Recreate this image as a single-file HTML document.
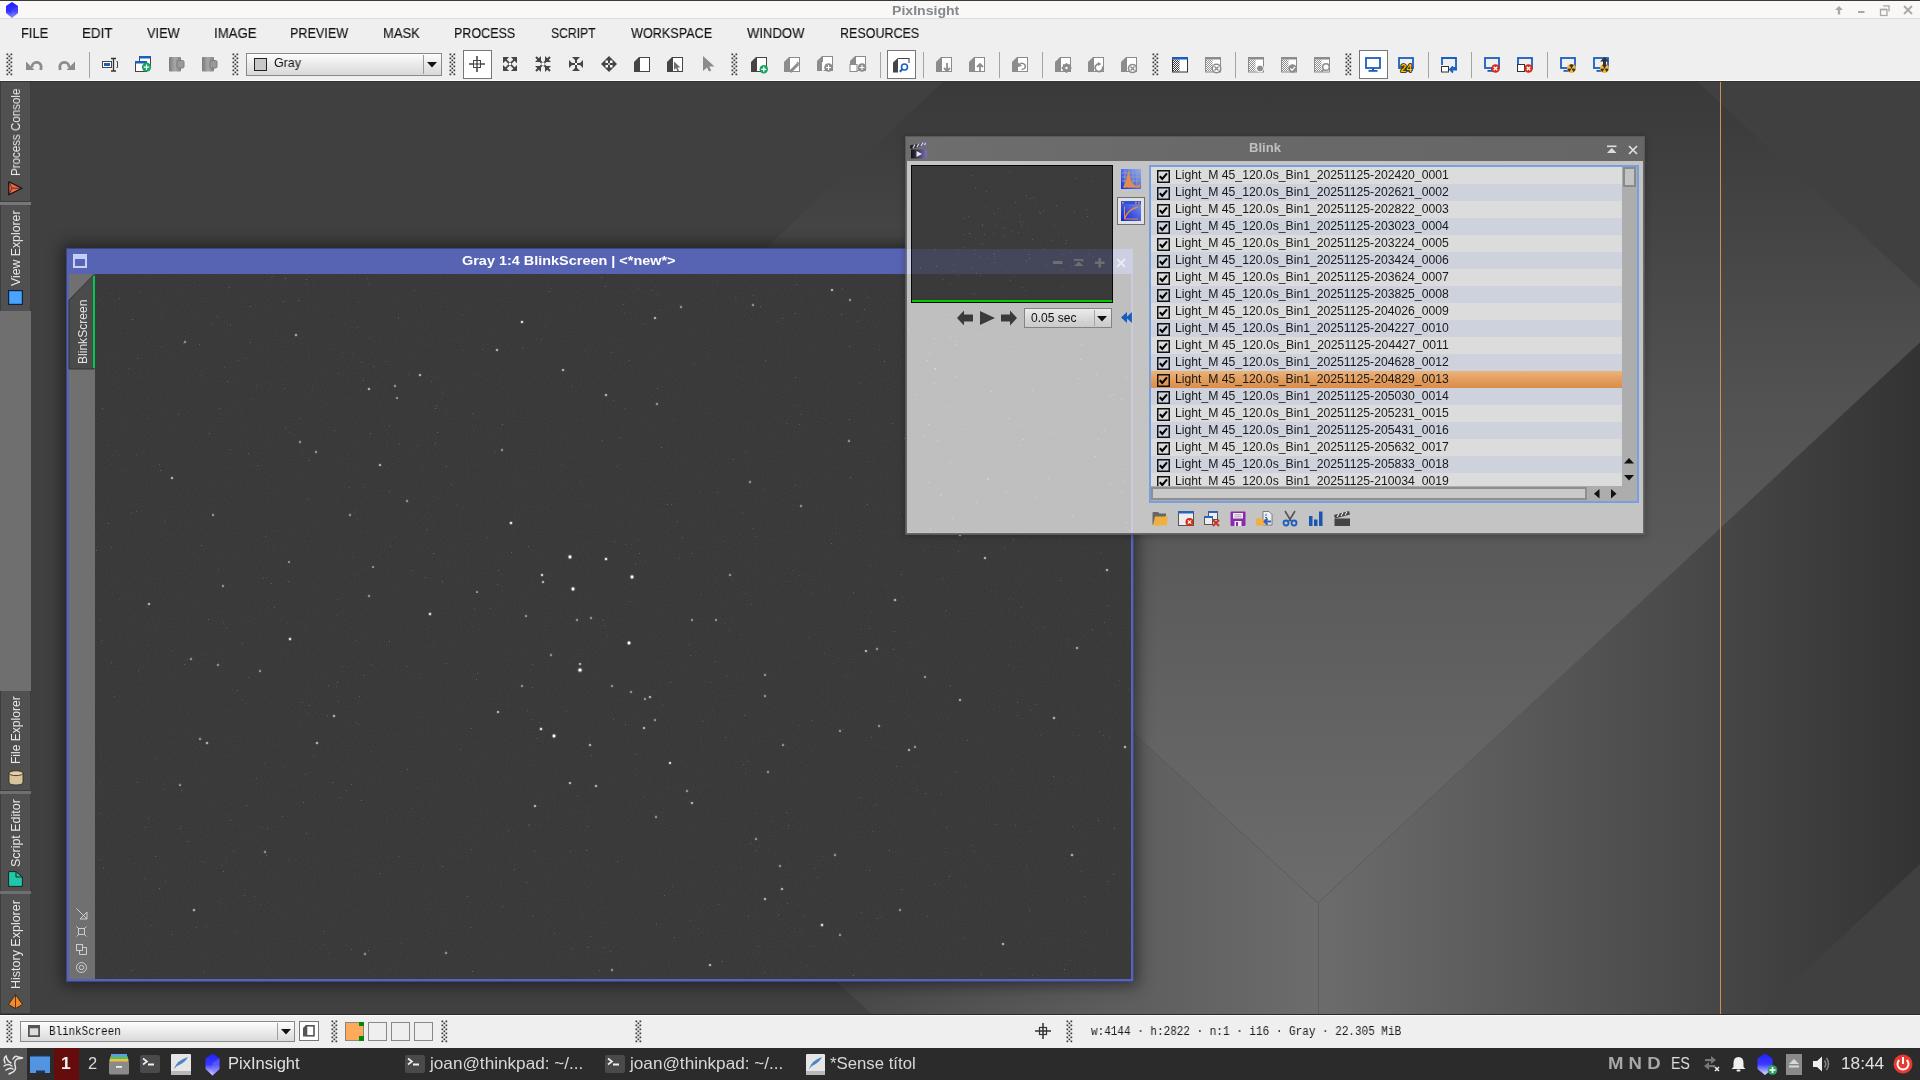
<!DOCTYPE html>
<html><head><meta charset="utf-8">
<style>
*{box-sizing:border-box;margin:0;padding:0}
html,body{width:1920px;height:1080px;overflow:hidden;background:#404040;font-family:"Liberation Sans",sans-serif}
.a{position:absolute}
.t{white-space:pre;line-height:1;will-change:transform}
svg{overflow:visible}
.pl1{background:rgba(110,125,230,0.10)}
.pl2{background:rgba(110,125,230,0.12)}
.pl3{display:none}
@supports (mix-blend-mode: plus-lighter){
.pl1{background:rgb(8,10,30);mix-blend-mode:plus-lighter}
.pl2{background:rgb(6,6,24);mix-blend-mode:plus-lighter}
.pl3{display:block;mix-blend-mode:plus-lighter}
}
</style></head><body>
<svg class="a" style="left:0;top:0" width="1920" height="1080" viewBox="0 0 1920 1080">
<defs>
<linearGradient id="gTop" gradientUnits="userSpaceOnUse" x1="0" y1="81" x2="0" y2="903">
<stop offset="0" stop-color="#393939"></stop><stop offset="0.39" stop-color="#525252"></stop><stop offset="1" stop-color="#6c6c6c"></stop></linearGradient>
<linearGradient id="gLeft" gradientUnits="userSpaceOnUse" x1="687" y1="0" x2="1318" y2="0">
<stop offset="0" stop-color="#3c3c3c"></stop><stop offset="1" stop-color="#6c6c6c"></stop></linearGradient>
<linearGradient id="gRight" gradientUnits="userSpaceOnUse" x1="1318" y1="0" x2="1920" y2="0">
<stop offset="0" stop-color="#6c6c6c"></stop><stop offset="1" stop-color="#333333"></stop></linearGradient>
</defs>
<rect x="0" y="81" width="1920" height="934" fill="#404040"></rect>
<polygon points="1318,903 687,322 1318,-270 1949,315" fill="url(#gTop)"></polygon>
<polygon points="687,322 1318,903 1318,1425 687,844" fill="url(#gLeft)"></polygon>
<polygon points="1318,903 1949,315 1949,837 1318,1425" fill="url(#gRight)"></polygon>
<polyline points="687,322 1318,903 1949,315" fill="none" stroke="#5a5a5a" stroke-width="1" opacity="0.5"></polyline>
<line x1="1318.5" y1="903" x2="1318.5" y2="1015" stroke="#5c5c5c" stroke-width="1"></line>
<rect x="1720" y="81" width="1" height="934" fill="#c8915a"></rect>
</svg>

<div class="a" style="left:0;top:0;width:1920px;height:1px;background:#3b3a38"></div>
<div class="a" style="left:0;top:1px;width:1920px;height:17px;background:#f9f8f6"></div>
<div class="a" style="left:0;top:18px;width:1920px;height:1px;background:#dedddb"></div>
<div class="a" style="left:0;top:19px;width:1920px;height:62px;background:#efefef"></div>
<div class="a" style="left:0;top:80px;width:1920px;height:1px;background:#fafafa"></div>
<svg class="a" style="left:5px;top:2px" width="14" height="16" viewBox="0 0 14 16"><defs><linearGradient id="cubeg" x1="0" y1="0" x2="0" y2="1"><stop offset="0" stop-color="#1a1aff"></stop><stop offset="0.55" stop-color="#3b3bff"></stop><stop offset="1" stop-color="#d8d8ff"></stop></linearGradient></defs>
<polygon points="7,0 13,4 13,11 7,16 1,11 1,4" fill="url(#cubeg)"></polygon><polygon points="7,8 13,4 13,11 7,16" fill="#5050ff" opacity="0.5"></polygon><polygon points="7,8 1,4 1,11 7,16" fill="#2020ff" opacity="0.4"></polygon></svg>
<div class="a t" style="left: 891.6px; top: 3.7px; font-size: 13.6px; font-weight: bold; color: rgb(133, 136, 140); transform-origin: 0px 0px; transform: scaleX(1.0362);">PixInsight</div>
<svg class="a" style="left:1834px;top:5px" width="10" height="10" viewBox="0 0 10 10"><path d="M5 1 L9 5 L6.2 5 L6.2 9.5 L3.8 9.5 L3.8 5 L1 5 Z" fill="#a8a8a8"></path></svg>
<svg class="a" style="left:1858px;top:11px" width="8" height="3" viewBox="0 0 8 3"><rect x="0" y="0" width="6.5" height="2" fill="#a8a8a8"></rect></svg>
<svg class="a" style="left:1879px;top:5px" width="12" height="11" viewBox="0 0 12 11"><rect x="1.5" y="4.5" width="6.5" height="6" fill="none" stroke="#a8a8a8" stroke-width="1.3"></rect><rect x="1.5" y="3.7" width="6.5" height="1.6" fill="#a8a8a8"></rect><path d="M4 0.8 H10 V6.5" fill="none" stroke="#a8a8a8" stroke-width="1.3"></path></svg>
<svg class="a" style="left:1903px;top:5px" width="10" height="10" viewBox="0 0 10 10"><path d="M1 1 L9 9 M9 1 L1 9" stroke="#a8a8a8" stroke-width="1.8"></path></svg>
<div class="a t" style="left: 21.08px; top: 26.25px; font-size: 14px; font-weight: normal; color: rgb(17, 17, 17); -webkit-text-stroke: 0.12px rgb(17, 17, 17); transform-origin: 0px 0px; transform: scaleX(0.9211);">FILE</div>
<div class="a t" style="left: 82.04px; top: 26.25px; font-size: 14px; font-weight: normal; color: rgb(17, 17, 17); -webkit-text-stroke: 0.12px rgb(17, 17, 17); transform-origin: 0px 0px; transform: scaleX(0.9573);">EDIT</div>
<div class="a t" style="left: 147px; top: 26.25px; font-size: 14px; font-weight: normal; color: rgb(17, 17, 17); -webkit-text-stroke: 0.12px rgb(17, 17, 17); transform-origin: 0px 0px; transform: scaleX(0.9162);">VIEW</div>
<div class="a t" style="left: 214.06px; top: 26.25px; font-size: 14px; font-weight: normal; color: rgb(17, 17, 17); -webkit-text-stroke: 0.12px rgb(17, 17, 17); transform-origin: 0px 0px; transform: scaleX(0.9434);">IMAGE</div>
<div class="a t" style="left: 290.4px; top: 26.25px; font-size: 14px; font-weight: normal; color: rgb(17, 17, 17); -webkit-text-stroke: 0.12px rgb(17, 17, 17); transform-origin: 0px 0px; transform: scaleX(0.9013);">PREVIEW</div>
<div class="a t" style="left: 383.37px; top: 26.25px; font-size: 14px; font-weight: normal; color: rgb(17, 17, 17); -webkit-text-stroke: 0.12px rgb(17, 17, 17); transform-origin: 0px 0px; transform: scaleX(0.9279);">MASK</div>
<div class="a t" style="left: 454.11px; top: 26.25px; font-size: 14px; font-weight: normal; color: rgb(17, 17, 17); -webkit-text-stroke: 0.12px rgb(17, 17, 17); transform-origin: 0px 0px; transform: scaleX(0.8939);">PROCESS</div>
<div class="a t" style="left: 550.5px; top: 26.25px; font-size: 14px; font-weight: normal; color: rgb(17, 17, 17); -webkit-text-stroke: 0.12px rgb(17, 17, 17); transform-origin: 0px 0px; transform: scaleX(0.869);">SCRIPT</div>
<div class="a t" style="left: 630.5px; top: 26.25px; font-size: 14px; font-weight: normal; color: rgb(17, 17, 17); -webkit-text-stroke: 0.12px rgb(17, 17, 17); transform-origin: 0px 0px; transform: scaleX(0.9014);">WORKSPACE</div>
<div class="a t" style="left: 746.8px; top: 26.25px; font-size: 14px; font-weight: normal; color: rgb(17, 17, 17); -webkit-text-stroke: 0.12px rgb(17, 17, 17); transform-origin: 0px 0px; transform: scaleX(0.9355);">WINDOW</div>
<div class="a t" style="left: 839.91px; top: 26.25px; font-size: 14px; font-weight: normal; color: rgb(17, 17, 17); -webkit-text-stroke: 0.12px rgb(17, 17, 17); transform-origin: 0px 0px; transform: scaleX(0.893);">RESOURCES</div>
<svg class="a" style="left:6px;top:53px" width="7" height="22"><rect x="0.5" y="0.5" width="1.7" height="1.7" fill="#3a3a3a"></rect><rect x="4.5" y="0.5" width="1.7" height="1.7" fill="#3a3a3a"></rect><rect x="2.5" y="2.5" width="1.7" height="1.7" fill="#3a3a3a"></rect><rect x="0.5" y="4.5" width="1.7" height="1.7" fill="#3a3a3a"></rect><rect x="4.5" y="4.5" width="1.7" height="1.7" fill="#3a3a3a"></rect><rect x="2.5" y="6.5" width="1.7" height="1.7" fill="#3a3a3a"></rect><rect x="0.5" y="8.5" width="1.7" height="1.7" fill="#3a3a3a"></rect><rect x="4.5" y="8.5" width="1.7" height="1.7" fill="#3a3a3a"></rect><rect x="2.5" y="10.5" width="1.7" height="1.7" fill="#3a3a3a"></rect><rect x="0.5" y="12.5" width="1.7" height="1.7" fill="#3a3a3a"></rect><rect x="4.5" y="12.5" width="1.7" height="1.7" fill="#3a3a3a"></rect><rect x="2.5" y="14.5" width="1.7" height="1.7" fill="#3a3a3a"></rect><rect x="0.5" y="16.5" width="1.7" height="1.7" fill="#3a3a3a"></rect><rect x="4.5" y="16.5" width="1.7" height="1.7" fill="#3a3a3a"></rect><rect x="2.5" y="18.5" width="1.7" height="1.7" fill="#3a3a3a"></rect><rect x="0.5" y="20.5" width="1.7" height="1.7" fill="#3a3a3a"></rect><rect x="4.5" y="20.5" width="1.7" height="1.7" fill="#3a3a3a"></rect></svg>
<svg class="a" style="left:232px;top:53px" width="7" height="22"><rect x="0.5" y="0.5" width="1.7" height="1.7" fill="#3a3a3a"></rect><rect x="4.5" y="0.5" width="1.7" height="1.7" fill="#3a3a3a"></rect><rect x="2.5" y="2.5" width="1.7" height="1.7" fill="#3a3a3a"></rect><rect x="0.5" y="4.5" width="1.7" height="1.7" fill="#3a3a3a"></rect><rect x="4.5" y="4.5" width="1.7" height="1.7" fill="#3a3a3a"></rect><rect x="2.5" y="6.5" width="1.7" height="1.7" fill="#3a3a3a"></rect><rect x="0.5" y="8.5" width="1.7" height="1.7" fill="#3a3a3a"></rect><rect x="4.5" y="8.5" width="1.7" height="1.7" fill="#3a3a3a"></rect><rect x="2.5" y="10.5" width="1.7" height="1.7" fill="#3a3a3a"></rect><rect x="0.5" y="12.5" width="1.7" height="1.7" fill="#3a3a3a"></rect><rect x="4.5" y="12.5" width="1.7" height="1.7" fill="#3a3a3a"></rect><rect x="2.5" y="14.5" width="1.7" height="1.7" fill="#3a3a3a"></rect><rect x="0.5" y="16.5" width="1.7" height="1.7" fill="#3a3a3a"></rect><rect x="4.5" y="16.5" width="1.7" height="1.7" fill="#3a3a3a"></rect><rect x="2.5" y="18.5" width="1.7" height="1.7" fill="#3a3a3a"></rect><rect x="0.5" y="20.5" width="1.7" height="1.7" fill="#3a3a3a"></rect><rect x="4.5" y="20.5" width="1.7" height="1.7" fill="#3a3a3a"></rect></svg>
<svg class="a" style="left:449px;top:53px" width="7" height="22"><rect x="0.5" y="0.5" width="1.7" height="1.7" fill="#3a3a3a"></rect><rect x="4.5" y="0.5" width="1.7" height="1.7" fill="#3a3a3a"></rect><rect x="2.5" y="2.5" width="1.7" height="1.7" fill="#3a3a3a"></rect><rect x="0.5" y="4.5" width="1.7" height="1.7" fill="#3a3a3a"></rect><rect x="4.5" y="4.5" width="1.7" height="1.7" fill="#3a3a3a"></rect><rect x="2.5" y="6.5" width="1.7" height="1.7" fill="#3a3a3a"></rect><rect x="0.5" y="8.5" width="1.7" height="1.7" fill="#3a3a3a"></rect><rect x="4.5" y="8.5" width="1.7" height="1.7" fill="#3a3a3a"></rect><rect x="2.5" y="10.5" width="1.7" height="1.7" fill="#3a3a3a"></rect><rect x="0.5" y="12.5" width="1.7" height="1.7" fill="#3a3a3a"></rect><rect x="4.5" y="12.5" width="1.7" height="1.7" fill="#3a3a3a"></rect><rect x="2.5" y="14.5" width="1.7" height="1.7" fill="#3a3a3a"></rect><rect x="0.5" y="16.5" width="1.7" height="1.7" fill="#3a3a3a"></rect><rect x="4.5" y="16.5" width="1.7" height="1.7" fill="#3a3a3a"></rect><rect x="2.5" y="18.5" width="1.7" height="1.7" fill="#3a3a3a"></rect><rect x="0.5" y="20.5" width="1.7" height="1.7" fill="#3a3a3a"></rect><rect x="4.5" y="20.5" width="1.7" height="1.7" fill="#3a3a3a"></rect></svg>
<svg class="a" style="left:731px;top:53px" width="7" height="22"><rect x="0.5" y="0.5" width="1.7" height="1.7" fill="#3a3a3a"></rect><rect x="4.5" y="0.5" width="1.7" height="1.7" fill="#3a3a3a"></rect><rect x="2.5" y="2.5" width="1.7" height="1.7" fill="#3a3a3a"></rect><rect x="0.5" y="4.5" width="1.7" height="1.7" fill="#3a3a3a"></rect><rect x="4.5" y="4.5" width="1.7" height="1.7" fill="#3a3a3a"></rect><rect x="2.5" y="6.5" width="1.7" height="1.7" fill="#3a3a3a"></rect><rect x="0.5" y="8.5" width="1.7" height="1.7" fill="#3a3a3a"></rect><rect x="4.5" y="8.5" width="1.7" height="1.7" fill="#3a3a3a"></rect><rect x="2.5" y="10.5" width="1.7" height="1.7" fill="#3a3a3a"></rect><rect x="0.5" y="12.5" width="1.7" height="1.7" fill="#3a3a3a"></rect><rect x="4.5" y="12.5" width="1.7" height="1.7" fill="#3a3a3a"></rect><rect x="2.5" y="14.5" width="1.7" height="1.7" fill="#3a3a3a"></rect><rect x="0.5" y="16.5" width="1.7" height="1.7" fill="#3a3a3a"></rect><rect x="4.5" y="16.5" width="1.7" height="1.7" fill="#3a3a3a"></rect><rect x="2.5" y="18.5" width="1.7" height="1.7" fill="#3a3a3a"></rect><rect x="0.5" y="20.5" width="1.7" height="1.7" fill="#3a3a3a"></rect><rect x="4.5" y="20.5" width="1.7" height="1.7" fill="#3a3a3a"></rect></svg>
<svg class="a" style="left:1152px;top:53px" width="7" height="22"><rect x="0.5" y="0.5" width="1.7" height="1.7" fill="#3a3a3a"></rect><rect x="4.5" y="0.5" width="1.7" height="1.7" fill="#3a3a3a"></rect><rect x="2.5" y="2.5" width="1.7" height="1.7" fill="#3a3a3a"></rect><rect x="0.5" y="4.5" width="1.7" height="1.7" fill="#3a3a3a"></rect><rect x="4.5" y="4.5" width="1.7" height="1.7" fill="#3a3a3a"></rect><rect x="2.5" y="6.5" width="1.7" height="1.7" fill="#3a3a3a"></rect><rect x="0.5" y="8.5" width="1.7" height="1.7" fill="#3a3a3a"></rect><rect x="4.5" y="8.5" width="1.7" height="1.7" fill="#3a3a3a"></rect><rect x="2.5" y="10.5" width="1.7" height="1.7" fill="#3a3a3a"></rect><rect x="0.5" y="12.5" width="1.7" height="1.7" fill="#3a3a3a"></rect><rect x="4.5" y="12.5" width="1.7" height="1.7" fill="#3a3a3a"></rect><rect x="2.5" y="14.5" width="1.7" height="1.7" fill="#3a3a3a"></rect><rect x="0.5" y="16.5" width="1.7" height="1.7" fill="#3a3a3a"></rect><rect x="4.5" y="16.5" width="1.7" height="1.7" fill="#3a3a3a"></rect><rect x="2.5" y="18.5" width="1.7" height="1.7" fill="#3a3a3a"></rect><rect x="0.5" y="20.5" width="1.7" height="1.7" fill="#3a3a3a"></rect><rect x="4.5" y="20.5" width="1.7" height="1.7" fill="#3a3a3a"></rect></svg>
<svg class="a" style="left:1345px;top:53px" width="7" height="22"><rect x="0.5" y="0.5" width="1.7" height="1.7" fill="#3a3a3a"></rect><rect x="4.5" y="0.5" width="1.7" height="1.7" fill="#3a3a3a"></rect><rect x="2.5" y="2.5" width="1.7" height="1.7" fill="#3a3a3a"></rect><rect x="0.5" y="4.5" width="1.7" height="1.7" fill="#3a3a3a"></rect><rect x="4.5" y="4.5" width="1.7" height="1.7" fill="#3a3a3a"></rect><rect x="2.5" y="6.5" width="1.7" height="1.7" fill="#3a3a3a"></rect><rect x="0.5" y="8.5" width="1.7" height="1.7" fill="#3a3a3a"></rect><rect x="4.5" y="8.5" width="1.7" height="1.7" fill="#3a3a3a"></rect><rect x="2.5" y="10.5" width="1.7" height="1.7" fill="#3a3a3a"></rect><rect x="0.5" y="12.5" width="1.7" height="1.7" fill="#3a3a3a"></rect><rect x="4.5" y="12.5" width="1.7" height="1.7" fill="#3a3a3a"></rect><rect x="2.5" y="14.5" width="1.7" height="1.7" fill="#3a3a3a"></rect><rect x="0.5" y="16.5" width="1.7" height="1.7" fill="#3a3a3a"></rect><rect x="4.5" y="16.5" width="1.7" height="1.7" fill="#3a3a3a"></rect><rect x="2.5" y="18.5" width="1.7" height="1.7" fill="#3a3a3a"></rect><rect x="0.5" y="20.5" width="1.7" height="1.7" fill="#3a3a3a"></rect><rect x="4.5" y="20.5" width="1.7" height="1.7" fill="#3a3a3a"></rect></svg>
<div class="a" style="left:89px;top:52px;width:1px;height:26px;background:#a4a4a4"></div>
<div class="a" style="left:880px;top:52px;width:1px;height:26px;background:#a4a4a4"></div>
<div class="a" style="left:923px;top:52px;width:1px;height:26px;background:#a4a4a4"></div>
<div class="a" style="left:999px;top:52px;width:1px;height:26px;background:#a4a4a4"></div>
<div class="a" style="left:1042px;top:52px;width:1px;height:26px;background:#a4a4a4"></div>
<div class="a" style="left:1235px;top:52px;width:1px;height:26px;background:#a4a4a4"></div>
<div class="a" style="left:1428px;top:52px;width:1px;height:26px;background:#a4a4a4"></div>
<div class="a" style="left:1471px;top:52px;width:1px;height:26px;background:#a4a4a4"></div>
<div class="a" style="left:1547px;top:52px;width:1px;height:26px;background:#a4a4a4"></div>
<svg class="a" style="left:26px;top:57px" width="16" height="16" viewBox="0 0 16 16"><path d="M6 10.5 A4.6 4.6 0 0 1 15.2 9.5 L14.8 13" fill="none" stroke="#8c8c8c" stroke-width="2.8"></path><polygon points="0,4.5 0,13 8.5,13" fill="#8c8c8c"></polygon></svg>
<svg class="a" style="left:59px;top:57px" width="16" height="16" viewBox="0 0 16 16"><path d="M10 10.5 A4.6 4.6 0 0 0 0.8 9.5 L1.2 13" fill="none" stroke="#8c8c8c" stroke-width="2.8"></path><polygon points="16,4.5 16,13 7.5,13" fill="#8c8c8c"></polygon></svg>
<svg class="a" style="left:102px;top:57px" width="16" height="16" viewBox="0 0 16 16"><rect x="0.5" y="4.5" width="9" height="6" fill="#fff" stroke="#444"></rect><rect x="2" y="6" width="6" height="3" fill="#1a5fc0"></rect><path d="M9 1.5 H14 M11.5 1.5 V14 M9 14 H14" stroke="#333" stroke-width="1.3" fill="none"></path><path d="M14.5 4.5 H15.5 V10.5 H14.5" stroke="#444" fill="none"></path></svg>
<svg class="a" style="left:135px;top:56px" width="16" height="16" viewBox="0 0 16 16"><rect x="4.5" y="1" width="11" height="10" fill="#fff" stroke="#444"></rect><rect x="4" y="0" width="12" height="2.5" fill="#1a5fc0"></rect><rect x="0.5" y="6" width="11" height="9.5" fill="#fff" stroke="#444"></rect><rect x="0" y="5" width="12" height="2.5" fill="#1a5fc0"></rect><circle cx="11.5" cy="11.2" r="4.6" fill="#18a360"></circle><path d="M11.5 8.5 V14 M8.8 11.2 H14.3" stroke="#fff" stroke-width="1.3"></path></svg>
<svg class="a" style="left:169px;top:57px" width="16" height="16" viewBox="0 0 16 16"><defs><linearGradient id="mg169" x1="0" x2="1"><stop offset="0" stop-color="#7a7a7a"></stop><stop offset="0.5" stop-color="#a8a8a8"></stop><stop offset="1" stop-color="#808080"></stop></linearGradient></defs><rect x="0" y="0" width="12" height="14.5" rx="1" fill="url(#mg169)"></rect><rect x="8" y="3.5" width="7" height="7.5" rx="1.5" fill="#9a9a9a" stroke="#7c7c7c"></rect></svg>
<svg class="a" style="left:202px;top:57px" width="16" height="16" viewBox="0 0 16 16"><defs><linearGradient id="mg202" x1="0" x2="1"><stop offset="0" stop-color="#7a7a7a"></stop><stop offset="0.5" stop-color="#a8a8a8"></stop><stop offset="1" stop-color="#808080"></stop></linearGradient></defs><rect x="0" y="0" width="12" height="14.5" rx="1" fill="url(#mg202)"></rect><rect x="8" y="3.5" width="7" height="7.5" rx="1.5" fill="#9a9a9a" stroke="#7c7c7c"></rect></svg>
<div class="a" style="left:246px;top:53px;width:196px;height:23px;border:1px solid #8a8a8a;background:linear-gradient(#fdfdfd,#e6e6e6 60%,#d9d9d9)"></div>
<div class="a" style="left:254px;top:58px;width:13px;height:13px;border:1.3px solid #222;background:#c8c8c8"></div>
<div class="a t" style="left: 274.4px; top: 57.4px; font-size: 12.7px; font-weight: normal; color: rgb(17, 17, 17); transform-origin: 0px 0px; transform: scaleX(0.9805);">Gray</div>
<div class="a" style="left:423px;top:55px;width:1px;height:19px;background:#9c9c9c"></div>
<svg class="a" style="left:427px;top:62px" width="10" height="6" viewBox="0 0 10 6"><polygon points="0,0 10,0 5,5.5" fill="#111"></polygon></svg>
<div class="a" style="left:463px;top:50px;width:29px;height:29px;border:1px solid #777;background:#fff"></div>
<svg class="a" style="left:469px;top:56px" width="16" height="16" viewBox="0 0 16 16"><path d="M8 0 V16 M0 8 H16" stroke="#454545" stroke-width="1.6"></path><rect x="4.5" y="4.5" width="7" height="7" fill="#fff" stroke="#454545" stroke-width="1"></rect><rect x="7.2" y="7.2" width="1.6" height="1.6" fill="#454545"></rect><path d="M8 4.5 V11.5 M4.5 8 H11.5" stroke="#454545" stroke-width="1.2"></path></svg>
<svg class="a" style="left:503px;top:57px" width="16" height="16" viewBox="0 0 16 16"><g transform="scale(0.875)"><polygon points="0,0 7,0 0,7" fill="#454545"></polygon><polygon points="16,0 9,0 16,7" fill="#454545"></polygon><polygon points="0,16 7,16 0,9" fill="#454545"></polygon><polygon points="16,16 9,16 16,9" fill="#454545"></polygon><path d="M1.5 1.5 L14.5 14.5 M14.5 1.5 L1.5 14.5" stroke="#454545" stroke-width="2"></path><rect x="6.8" y="6.8" width="2.4" height="2.4" fill="#fff"></rect></g></svg>
<svg class="a" style="left:535px;top:56px" width="16" height="16" viewBox="0 0 16 16"><path d="M1 1 L15 15 M15 1 L1 15" stroke="#454545" stroke-width="2"></path><polygon points="6,0 6,6 0,6" fill="#454545"></polygon><polygon points="10,0 10,6 16,6" fill="#454545"></polygon><polygon points="6,16 6,10 0,10" fill="#454545"></polygon><polygon points="10,16 10,10 16,10" fill="#454545"></polygon><rect x="6.5" y="6.5" width="3" height="3" fill="#fff"></rect></svg>
<svg class="a" style="left:568px;top:56px" width="16" height="16" viewBox="0 0 16 16"><path d="M8 2 V14 M2 8 H14" stroke="#454545" stroke-width="2"></path><polygon points="4,1 12,1 8,5" fill="#454545"></polygon><polygon points="4,15 12,15 8,11" fill="#454545"></polygon><polygon points="1,4 1,12 5,8" fill="#454545"></polygon><polygon points="15,4 15,12 11,8" fill="#454545"></polygon><rect x="7" y="7" width="2" height="2" fill="#fff"></rect></svg>
<svg class="a" style="left:601px;top:56px" width="16" height="16" viewBox="0 0 16 16"><polygon points="8,0 16,8 8,16 0,8" fill="#454545"></polygon><rect x="4.5" y="4.5" width="2.5" height="2.5" fill="#fff"></rect><rect x="9" y="4.5" width="2.5" height="2.5" fill="#fff"></rect><rect x="4.5" y="9" width="2.5" height="2.5" fill="#fff"></rect><rect x="9" y="9" width="2.5" height="2.5" fill="#fff"></rect><rect x="7.2" y="7.2" width="1.6" height="1.6" fill="#fff"></rect></svg>
<svg class="a" style="left:634px;top:57px" width="16" height="16" viewBox="0 0 16 16"><polygon points="0,5 5,0 5,15 0,15" fill="#454545"></polygon><rect x="5.5" y="0.5" width="10" height="14" fill="#fff" stroke="#454545" stroke-width="1"></rect></svg>
<svg class="a" style="left:667px;top:57px" width="16" height="16" viewBox="0 0 16 16"><polygon points="0,5 5,0 5,15 0,15" fill="#454545"></polygon><rect x="5.5" y="0.5" width="10" height="14" fill="#fff" stroke="#454545" stroke-width="1"></rect><polygon points="7,4.5 7,13 9,11 10.5,14.5 12,13.5 10.5,10.5 13.5,10.5" fill="#6e6e6e"></polygon></svg>
<svg class="a" style="left:703px;top:56px" width="12" height="16" viewBox="0 0 12 16"><polygon points="0,0 0,15 4,11.5 6,15.5 8.3,14.5 6.3,10.5 11.5,10.5" fill="#8c8c8c"></polygon></svg>
<svg class="a" style="left:751px;top:57px" width="16" height="16" viewBox="0 0 16 16"><polygon points="0,5 5,0 5,15 0,15" fill="#454545"></polygon><rect x="5.5" y="0.5" width="10" height="14" fill="#fff" stroke="#454545" stroke-width="1"></rect><circle cx="12.8" cy="12.3" r="4.2" fill="#18a360"></circle><path d="M12.8 9.8 V14.8 M10.3 12.3 H15.3" stroke="#fff" stroke-width="1.3"></path></svg>
<svg class="a" style="left:784px;top:57px" width="16" height="16" viewBox="0 0 16 16"><polygon points="0,5 5,0 5,15 0,15" fill="#8c8c8c"></polygon><rect x="5.5" y="0.5" width="10" height="14" fill="#fff" stroke="#8c8c8c" stroke-width="1"></rect><path d="M6 15 L14 7" stroke="#8c8c8c" stroke-width="3"></path><path d="M13 5 L15 7" stroke="#8c8c8c" stroke-width="1.2"></path></svg>
<svg class="a" style="left:817px;top:56px" width="16" height="16" viewBox="0 0 16 16"><polygon points="0,5 5,0 5,15 0,15" fill="#8c8c8c"></polygon><rect x="5.5" y="0.5" width="10" height="14" fill="#fff" stroke="#8c8c8c" stroke-width="1"></rect><rect x="5" y="6" width="1.5" height="9" fill="#fff"></rect><circle cx="11.5" cy="11.5" r="4.3" fill="#8c8c8c"></circle><path d="M11.5 9 V14 M9 11.5 H14" stroke="#fff" stroke-width="1.2"></path></svg>
<svg class="a" style="left:850px;top:56px" width="16" height="16" viewBox="0 0 16 16"><polygon points="0,5 5,0 5,15 0,15" fill="#8c8c8c"></polygon><rect x="5.5" y="0.5" width="10" height="14" fill="#fff" stroke="#8c8c8c" stroke-width="1"></rect><rect x="0" y="8.5" width="7" height="7" fill="#fff" stroke="#8c8c8c"></rect><circle cx="12" cy="11.5" r="4.3" fill="#8c8c8c"></circle><path d="M12 9 V14 M9.5 11.5 H14.5" stroke="#fff" stroke-width="1.2"></path></svg>
<div class="a" style="left:887px;top:50px;width:29px;height:29px;border:1px solid #777;background:#fff"></div>
<svg class="a" style="left:893px;top:57px" width="16" height="16" viewBox="0 0 16 16"><polygon points="0,5.5 5,1 5,15.5 0,15.5" fill="#454545"></polygon><path d="M5 1.5 H16 V6" fill="none" stroke="#454545" stroke-width="1.1"></path><circle cx="11.5" cy="10" r="3" fill="none" stroke="#1a5fc0" stroke-width="1.6"></circle><path d="M9.3 12.3 L6.8 14.8" stroke="#1a5fc0" stroke-width="2"></path></svg>
<svg class="a" style="left:936px;top:57px" width="16" height="16" viewBox="0 0 16 16"><polygon points="0,5 5,0 5,15 0,15" fill="#8c8c8c"></polygon><rect x="5.5" y="0.5" width="10" height="14" fill="#fff" stroke="#8c8c8c" stroke-width="1"></rect><path d="M11 6 V14 M8 11 L11 14 L14 11" fill="none" stroke="#8c8c8c" stroke-width="1.8"></path></svg>
<svg class="a" style="left:969px;top:57px" width="16" height="16" viewBox="0 0 16 16"><polygon points="0,5 5,0 5,15 0,15" fill="#8c8c8c"></polygon><rect x="5.5" y="0.5" width="10" height="14" fill="#fff" stroke="#8c8c8c" stroke-width="1"></rect><path d="M11 15 V7 M8 10 L11 7 L14 10" fill="none" stroke="#8c8c8c" stroke-width="1.8"></path></svg>
<svg class="a" style="left:1012px;top:57px" width="16" height="16" viewBox="0 0 16 16"><polygon points="0,5 5,0 5,15 0,15" fill="#8c8c8c"></polygon><rect x="5.5" y="0.5" width="10" height="14" fill="#fff" stroke="#8c8c8c" stroke-width="1"></rect><path d="M7 8 Q10 4.5 13 8 Q14.5 12 9.5 12.5" fill="none" stroke="#8c8c8c" stroke-width="1.6"></path><polygon points="6,5.5 6,10 10,9" fill="#8c8c8c"></polygon></svg>
<svg class="a" style="left:1055px;top:57px" width="16" height="16" viewBox="0 0 16 16"><polygon points="0,5 5,0 5,15 0,15" fill="#8c8c8c"></polygon><rect x="5.5" y="0.5" width="10" height="14" fill="#fff" stroke="#8c8c8c" stroke-width="1"></rect><circle cx="11.5" cy="11" r="3.2" fill="none" stroke="#8c8c8c" stroke-width="2.2"></circle><path d="M11.5 6 V16 M6.5 11 H16.5 M8 7.5 L15 14.5 M15 7.5 L8 14.5" stroke="#8c8c8c" stroke-width="1.3"></path><circle cx="11.5" cy="11" r="1.2" fill="#fff"></circle></svg>
<svg class="a" style="left:1088px;top:57px" width="16" height="16" viewBox="0 0 16 16"><polygon points="0,5 5,0 5,15 0,15" fill="#8c8c8c"></polygon><rect x="5.5" y="0.5" width="10" height="14" fill="#fff" stroke="#8c8c8c" stroke-width="1"></rect><path d="M14.5 9.5 A3.8 3.8 0 1 1 11.5 7" fill="none" stroke="#8c8c8c" stroke-width="1.8"></path><polygon points="10,5 13.5,7 10,9" fill="#8c8c8c"></polygon></svg>
<svg class="a" style="left:1121px;top:57px" width="16" height="16" viewBox="0 0 16 16"><polygon points="0,5 5,0 5,15 0,15" fill="#8c8c8c"></polygon><rect x="5.5" y="0.5" width="10" height="14" fill="#fff" stroke="#8c8c8c" stroke-width="1"></rect><circle cx="11.5" cy="11.5" r="4" fill="#fff" stroke="#8c8c8c" stroke-width="1.6"></circle><path d="M9.5 9.5 L13.5 13.5 M13.5 9.5 L9.5 13.5" stroke="#8c8c8c" stroke-width="1.4"></path></svg>
<svg class="a" style="left:1172px;top:57px" width="16" height="16" viewBox="0 0 16 16"><defs><pattern id="ck1172" width="2" height="2" patternUnits="userSpaceOnUse"><rect width="1" height="1" fill="#333"></rect><rect x="1" y="1" width="1" height="1" fill="#333"></rect></pattern></defs><rect x="0.5" y="1" width="15" height="14" fill="#fff" stroke="#333"></rect><rect x="0" y="0" width="16" height="2.5" fill="#1a5fc0"></rect><rect x="1" y="2.5" width="6.5" height="12" fill="url(#ck1172)"></rect></svg>
<svg class="a" style="left:1205px;top:57px" width="16" height="16" viewBox="0 0 16 16"><defs><pattern id="ck1205" width="2" height="2" patternUnits="userSpaceOnUse"><rect width="1" height="1" fill="#8c8c8c"></rect><rect x="1" y="1" width="1" height="1" fill="#8c8c8c"></rect></pattern></defs><rect x="0.5" y="1" width="15" height="14" fill="#fff" stroke="#8c8c8c"></rect><rect x="0" y="0" width="16" height="2.5" fill="#8c8c8c"></rect><rect x="1" y="2.5" width="6.5" height="12" fill="url(#ck1205)"></rect><circle cx="11.5" cy="11.5" r="4.2" fill="#fff" stroke="#8c8c8c" stroke-width="1.6"></circle><path d="M9.5 9.5 L13.5 13.5 M13.5 9.5 L9.5 13.5" stroke="#8c8c8c" stroke-width="1.4"></path></svg>
<svg class="a" style="left:1248px;top:57px" width="16" height="16" viewBox="0 0 16 16"><defs><pattern id="ck1248" width="2" height="2" patternUnits="userSpaceOnUse"><rect width="1" height="1" fill="#8c8c8c"></rect><rect x="1" y="1" width="1" height="1" fill="#8c8c8c"></rect></pattern></defs><rect x="0.5" y="1" width="15" height="14" fill="#fff" stroke="#8c8c8c"></rect><rect x="0" y="0" width="16" height="2.5" fill="#8c8c8c"></rect><rect x="1" y="2.5" width="6.5" height="12" fill="url(#ck1248)"></rect><circle cx="12" cy="11.5" r="3.5" fill="#8c8c8c" stroke="#fff" stroke-width="1"></circle></svg>
<svg class="a" style="left:1281px;top:57px" width="16" height="16" viewBox="0 0 16 16"><defs><pattern id="ck1281" width="2" height="2" patternUnits="userSpaceOnUse"><rect width="1" height="1" fill="#8c8c8c"></rect><rect x="1" y="1" width="1" height="1" fill="#8c8c8c"></rect></pattern></defs><rect x="0.5" y="1" width="15" height="14" fill="#fff" stroke="#8c8c8c"></rect><rect x="0" y="0" width="16" height="2.5" fill="#8c8c8c"></rect><rect x="1" y="2.5" width="6.5" height="12" fill="url(#ck1281)"></rect><circle cx="11.5" cy="11.5" r="4.2" fill="#8c8c8c"></circle><path d="M9.3 11.5 L11 13.3 L14 9.8" fill="none" stroke="#fff" stroke-width="1.3"></path></svg>
<svg class="a" style="left:1314px;top:57px" width="16" height="16" viewBox="0 0 16 16"><defs><pattern id="ck1314" width="2" height="2" patternUnits="userSpaceOnUse"><rect width="1" height="1" fill="#8c8c8c"></rect><rect x="1" y="1" width="1" height="1" fill="#8c8c8c"></rect></pattern></defs><rect x="0.5" y="1" width="15" height="14" fill="#fff" stroke="#8c8c8c"></rect><rect x="0" y="0" width="16" height="2.5" fill="#8c8c8c"></rect><rect x="1" y="2.5" width="6.5" height="12" fill="url(#ck1314)"></rect><circle cx="12" cy="10" r="3.3" fill="#fff" stroke="#8c8c8c" stroke-width="1.5"></circle><path d="M9.5 12.5 L7.5 14.8" stroke="#8c8c8c" stroke-width="1.8"></path></svg>
<div class="a" style="left:1359px;top:50px;width:29px;height:29px;border:1px solid #777;background:#fff"></div>
<svg class="a" style="left:1365px;top:57px" width="16" height="16" viewBox="0 0 16 16"><rect x="1" y="1" width="14" height="10" fill="none" stroke="#1a5fc0" stroke-width="1.8"></rect><rect x="7" y="11" width="2" height="2" fill="#1a5fc0"></rect><rect x="3.5" y="13" width="9" height="1.8" fill="#1a5fc0"></rect></svg>
<svg class="a" style="left:1398px;top:57px" width="16" height="16" viewBox="0 0 16 16"><rect x="1" y="1" width="14" height="10" fill="none" stroke="#1a5fc0" stroke-width="1.8"></rect><rect x="7" y="11" width="2" height="2" fill="#1a5fc0"></rect><rect x="3.5" y="13" width="9" height="1.8" fill="#1a5fc0"></rect><text x="2.5" y="15" font-family="Liberation Sans" font-weight="bold" font-size="10.5" fill="#f8c000" stroke="#111" stroke-width="1.6" stroke-linejoin="round" paint-order="stroke fill">24</text></svg>
<svg class="a" style="left:1441px;top:57px" width="16" height="16" viewBox="0 0 16 16"><path d="M1 8 V1 H15 V11 H12" fill="none" stroke="#1a5fc0" stroke-width="1.8"></path><rect x="0.5" y="9.5" width="7" height="5.5" fill="#fff" stroke="#333"></rect><path d="M9 12.5 H16 M12 9.5 L9 12.5 L12 15.5" fill="none" stroke="#1a5fc0" stroke-width="1.8"></path></svg>
<svg class="a" style="left:1484px;top:57px" width="16" height="16" viewBox="0 0 16 16"><rect x="1" y="1" width="14" height="10" fill="none" stroke="#1a5fc0" stroke-width="1.8"></rect><rect x="7" y="11" width="2" height="2" fill="#1a5fc0"></rect><rect x="3.5" y="13" width="9" height="1.8" fill="#1a5fc0"></rect><circle cx="11.5" cy="11.5" r="4.3" fill="#d42a18"></circle><path d="M9.7 9.7 L13.3 13.3 M13.3 9.7 L9.7 13.3" stroke="#fff" stroke-width="1.3"></path></svg>
<svg class="a" style="left:1517px;top:57px" width="16" height="16" viewBox="0 0 16 16"><rect x="1" y="1" width="14" height="10" fill="none" stroke="#1a5fc0" stroke-width="1.8"></rect><rect x="0.5" y="7.5" width="7" height="7" fill="#fff" stroke="#333"></rect><circle cx="11.5" cy="11.5" r="4.3" fill="#d42a18"></circle><path d="M9.7 9.7 L13.3 13.3 M13.3 9.7 L9.7 13.3" stroke="#fff" stroke-width="1.3"></path></svg>
<svg class="a" style="left:1560px;top:57px" width="16" height="16" viewBox="0 0 16 16"><rect x="1" y="1" width="14" height="10" fill="none" stroke="#1a5fc0" stroke-width="1.8"></rect><rect x="7" y="11" width="2" height="2" fill="#1a5fc0"></rect><rect x="3.5" y="13" width="9" height="1.8" fill="#1a5fc0"></rect><circle cx="11.5" cy="11.5" r="4.5" fill="#f7b733"></circle><path d="M11.5 11.5 L9.2 8 A4 4 0 0 1 13.8 8 Z M11.5 11.5 L15.5 11.8 A4 4 0 0 1 13.5 15 Z M11.5 11.5 L9.5 15 A4 4 0 0 1 7.5 11.8 Z" fill="#333"></path></svg>
<svg class="a" style="left:1593px;top:57px" width="16" height="16" viewBox="0 0 16 16"><rect x="1" y="1" width="14" height="10" fill="none" stroke="#1a5fc0" stroke-width="1.8"></rect><rect x="7" y="11" width="2" height="2" fill="#1a5fc0"></rect><rect x="3.5" y="13" width="9" height="1.8" fill="#1a5fc0"></rect><circle cx="11.5" cy="11.5" r="4.5" fill="#f7b733"></circle><path d="M11.5 11.5 L9.2 8 A4 4 0 0 1 13.8 8 Z M11.5 11.5 L15.5 11.8 A4 4 0 0 1 13.5 15 Z M11.5 11.5 L9.5 15 A4 4 0 0 1 7.5 11.8 Z" fill="#333"></path><polygon points="11.5,0 16,4.5 13,4.5 13,8 10,8 10,4.5 7,4.5" fill="#333"></polygon></svg>
<div class="a" style="left:0;top:81px;width:31px;height:934px;background:#3d3d3d"></div>
<div class="a" style="left:0;top:81px;width:31px;height:1px;background:#2e2e2e"></div>
<div class="a" style="left:1px;top:82px;width:29px;height:119px;background:#505050"></div>
<div class="a t" style="left: 10px; top: 175.5px; font-size: 12px; color: rgb(232, 232, 232); transform-origin: 0px 0px; transform: rotate(-90deg) scaleX(0.9634);">Process Console</div>
<div class="a" style="left:0;top:202px;width:31px;height:3px;background:#777"></div>
<div class="a" style="left:1px;top:205px;width:29px;height:106px;background:#505050"></div>
<div class="a t" style="left: 10px; top: 285.5px; font-size: 12px; color: rgb(232, 232, 232); transform-origin: 0px 0px; transform: rotate(-90deg) scaleX(1.0228);">View Explorer</div>
<div class="a" style="left:0;top:311px;width:31px;height:380px;background:#6f6f6f"></div>
<div class="a" style="left:1px;top:691px;width:29px;height:99px;background:#505050"></div>
<div class="a t" style="left: 10px; top: 764.4px; font-size: 12px; color: rgb(232, 232, 232); transform-origin: 0px 0px; transform: rotate(-90deg) scaleX(1.0051);">File Explorer</div>
<div class="a" style="left:0;top:791px;width:31px;height:3px;background:#6f6f6f"></div>
<div class="a" style="left:1px;top:794px;width:29px;height:97px;background:#505050"></div>
<div class="a t" style="left: 10px; top: 866.7px; font-size: 12px; color: rgb(232, 232, 232); transform-origin: 0px 0px; transform: rotate(-90deg) scaleX(1.0373);">Script Editor</div>
<div class="a" style="left:0;top:891px;width:31px;height:3px;background:#6f6f6f"></div>
<div class="a" style="left:1px;top:894px;width:29px;height:119px;background:#505050"></div>
<div class="a t" style="left: 10px; top: 988.9px; font-size: 12px; color: rgb(232, 232, 232); transform-origin: 0px 0px; transform: rotate(-90deg) scaleX(1.0415);">History Explorer</div>
<svg class="a" style="left:8px;top:181px" width="15" height="15" viewBox="0 0 15 15"><polygon points="0.8,0.8 14,7.2 0.8,13.8" fill="#f26a48" stroke="#111" stroke-width="1.2" stroke-linejoin="round"></polygon><path d="M0.8 0.8 L4 7.2 L0.8 13.8 M4 7.2 H14" stroke="#3a1a10" stroke-width="0.8" fill="none"></path></svg>
<svg class="a" style="left:8px;top:290px" width="15" height="15" viewBox="0 0 15 15"><rect x="0.6" y="0.6" width="13.8" height="13.8" fill="#4aa3ff" stroke="#0d2440" stroke-width="1.2"></rect></svg>
<svg class="a" style="left:8px;top:770px" width="16" height="16" viewBox="0 0 16 16"><path d="M1 3 V12 Q1 15 8 15 Q15 15 15 12 V3" fill="#d8c49c" stroke="#3a3020" stroke-width="0.9"></path><ellipse cx="8" cy="3.2" rx="7" ry="2.4" fill="#e2d0aa" stroke="#3a3020" stroke-width="0.9"></ellipse></svg>
<svg class="a" style="left:8px;top:871px" width="15" height="16" viewBox="0 0 15 16"><polygon points="0.6,0.6 8,0.6 14.4,6 14.4,15.4 0.6,15.4" fill="#1ec8a8" stroke="#222" stroke-width="1"></polygon><path d="M8 0.6 V6 H14.4" fill="none" stroke="#222" stroke-width="1"></path></svg>
<svg class="a" style="left:8px;top:994px" width="15" height="15" viewBox="0 0 15 15"><polygon points="7.5,0.5 14.5,10.5 7.5,14.5 0.5,10.5" fill="#f48a30" stroke="#3a2008" stroke-width="0.9"></polygon><path d="M7.5 0.5 V14.5" stroke="#3a2008" stroke-width="0.8"></path></svg>
<div class="a" style="left:0;top:81px;width:1920px;height:1px;background:#333"></div>
<div class="a" style="left:66px;top:248px;width:1068px;height:734px;box-shadow:0 0 14px 4px rgba(0,0,0,0.45)"></div>
<div class="a" style="left:66px;top:248px;width:1068px;height:734px;background:#5764b4;border:1px solid #3d4785"></div>
<svg class="a" style="left:73px;top:254px" width="14" height="14" viewBox="0 0 14 14"><rect x="0" y="0" width="14" height="14" fill="#c9d1fb"></rect><rect x="1" y="1" width="12" height="3.5" fill="#c2cbf8"></rect><rect x="2" y="5" width="10" height="7" fill="#5764b4"></rect></svg>
<div class="a t" style="left: 462.3px; top: 253.8px; font-size: 13.4px; font-weight: bold; color: rgb(255, 255, 255); transform-origin: 0px 0px; transform: scaleX(1.0783);">Gray 1:4 BlinkScreen | &lt;*new*&gt;</div>
<div class="a" style="left:69px;top:274px;width:26px;height:705px;background:#707070"></div>
<div class="a" style="left:95px;top:274px;width:1036px;height:705px;background:#3c3c3c"></div>
<svg class="a" style="left:95px;top:274px" width="1036" height="705"><defs><filter id="grain" x="0" y="0" width="100%" height="100%"><feTurbulence type="fractalNoise" baseFrequency="0.85" numOctaves="1" seed="4"></feTurbulence><feColorMatrix type="matrix" values="0 0 0 0 0  0 0 0 0 0  0 0 0 0 0  1.4 0 0 0 -0.62"></feColorMatrix></filter></defs><rect width="1036" height="705" filter="url(#grain)" opacity="0.22"></rect></svg>
<svg class="a" style="left:69px;top:274px" width="27" height="96" viewBox="0 0 27 96"><polygon points="0,26 25,0.5 25,95 0,95" fill="#4b4b4b" stroke="#353535" stroke-width="1"></polygon><rect x="24" y="2" width="2" height="92" fill="#00c853"></rect></svg>
<div class="a t" style="left: 77.3px; top: 364.2px; font-size: 12px; color: rgb(226, 226, 226); transform-origin: 0px 0px; transform: rotate(-90deg) scaleX(1.0054);">BlinkScreen</div>
<svg class="a" style="left:76px;top:908px" width="12" height="12" viewBox="0 0 12 12"><path d="M0.5 0.5 L10.5 10.5" stroke="#d8d8d8" stroke-width="0.9"></path><path d="M4 11 H11 V4 Z" fill="none" stroke="#d8d8d8" stroke-width="0.9"></path></svg>
<svg class="a" style="left:76px;top:926px" width="12" height="12" viewBox="0 0 12 12"><rect x="2.5" y="2.5" width="6" height="6" fill="none" stroke="#d8d8d8" stroke-width="0.9"></rect><path d="M0.5 0.5 L2.5 2.5 M10.5 0.5 L8.5 2.5 M0.5 10.5 L2.5 8.5 M10.5 10.5 L8.5 8.5" stroke="#d8d8d8" stroke-width="0.9"></path></svg>
<svg class="a" style="left:76px;top:944px" width="12" height="12" viewBox="0 0 12 12"><rect x="0.5" y="0.5" width="6" height="6" fill="none" stroke="#d8d8d8" stroke-width="0.9"></rect><path d="M6.5 3.5 H10.5 V10.5 H3.5 V6.5" fill="none" stroke="#d8d8d8" stroke-width="0.9"></path></svg>
<svg class="a" style="left:76px;top:962px" width="12" height="12" viewBox="0 0 12 12"><circle cx="5.5" cy="5.5" r="5" fill="none" stroke="#d8d8d8" stroke-width="0.9"></circle><circle cx="5.5" cy="5.5" r="2.2" fill="none" stroke="#d8d8d8" stroke-width="0.9"></circle></svg>
<svg class="a" style="left:0;top:0" width="1920" height="1080"><rect x="431" y="381" width="1" height="1" fill="#fff" opacity="0.16"></rect><rect x="171" y="651" width="1" height="1" fill="#fff" opacity="0.11"></rect><rect x="156" y="631" width="1" height="1" fill="#fff" opacity="0.06"></rect><rect x="544" y="324" width="1" height="1" fill="#fff" opacity="0.07"></rect><rect x="535" y="855" width="1" height="1" fill="#fff" opacity="0.07"></rect><rect x="327" y="715" width="1" height="1" fill="#fff" opacity="0.21"></rect><rect x="692" y="553" width="1" height="1" fill="#fff" opacity="0.22"></rect><rect x="144" y="878" width="1" height="1" fill="#fff" opacity="0.10"></rect><rect x="245" y="358" width="1" height="1" fill="#fff" opacity="0.10"></rect><rect x="939" y="402" width="1" height="1" fill="#fff" opacity="0.15"></rect><rect x="756" y="536" width="1" height="1" fill="#fff" opacity="0.14"></rect><rect x="161" y="317" width="1" height="1" fill="#fff" opacity="0.09"></rect><rect x="799" y="575" width="1" height="1" fill="#fff" opacity="0.10"></rect><rect x="701" y="593" width="1" height="1" fill="#fff" opacity="0.10"></rect><rect x="917" y="766" width="1" height="1" fill="#fff" opacity="0.09"></rect><rect x="689" y="644" width="1" height="1" fill="#fff" opacity="0.20"></rect><rect x="850" y="477" width="1" height="1" fill="#fff" opacity="0.22"></rect><rect x="218" y="569" width="1" height="1" fill="#fff" opacity="0.18"></rect><rect x="253" y="618" width="1" height="1" fill="#fff" opacity="0.06"></rect><rect x="786" y="812" width="1" height="1" fill="#fff" opacity="0.15"></rect><rect x="1000" y="495" width="1" height="1" fill="#fff" opacity="0.17"></rect><rect x="710" y="682" width="1" height="1" fill="#fff" opacity="0.13"></rect><rect x="964" y="938" width="1" height="1" fill="#fff" opacity="0.13"></rect><rect x="782" y="318" width="1" height="1" fill="#fff" opacity="0.17"></rect><rect x="764" y="972" width="1" height="1" fill="#fff" opacity="0.19"></rect><rect x="390" y="546" width="1" height="1" fill="#fff" opacity="0.16"></rect><rect x="119" y="599" width="1" height="1" fill="#fff" opacity="0.08"></rect><rect x="217" y="316" width="1" height="1" fill="#fff" opacity="0.18"></rect><rect x="230" y="449" width="1" height="1" fill="#fff" opacity="0.12"></rect><rect x="996" y="332" width="1" height="1" fill="#fff" opacity="0.13"></rect><rect x="664" y="895" width="1" height="1" fill="#fff" opacity="0.19"></rect><rect x="988" y="470" width="1" height="1" fill="#fff" opacity="0.12"></rect><rect x="467" y="896" width="1" height="1" fill="#fff" opacity="0.21"></rect><rect x="252" y="399" width="1" height="1" fill="#fff" opacity="0.09"></rect><rect x="337" y="615" width="1" height="1" fill="#fff" opacity="0.15"></rect><rect x="367" y="278" width="1" height="1" fill="#fff" opacity="0.12"></rect><rect x="477" y="673" width="1" height="1" fill="#fff" opacity="0.21"></rect><rect x="809" y="637" width="1" height="1" fill="#fff" opacity="0.15"></rect><rect x="795" y="313" width="1" height="1" fill="#fff" opacity="0.20"></rect><rect x="902" y="889" width="1" height="1" fill="#fff" opacity="0.19"></rect><rect x="501" y="555" width="1" height="1" fill="#fff" opacity="0.07"></rect><rect x="751" y="319" width="1" height="1" fill="#fff" opacity="0.06"></rect><rect x="312" y="389" width="1" height="1" fill="#fff" opacity="0.11"></rect><rect x="150" y="275" width="1" height="1" fill="#fff" opacity="0.08"></rect><rect x="201" y="530" width="1" height="1" fill="#fff" opacity="0.05"></rect><rect x="999" y="706" width="1" height="1" fill="#fff" opacity="0.08"></rect><rect x="357" y="519" width="1" height="1" fill="#fff" opacity="0.11"></rect><rect x="223" y="871" width="1" height="1" fill="#fff" opacity="0.22"></rect><rect x="577" y="615" width="1" height="1" fill="#fff" opacity="0.06"></rect><rect x="202" y="516" width="1" height="1" fill="#fff" opacity="0.10"></rect><rect x="952" y="388" width="1" height="1" fill="#fff" opacity="0.05"></rect><rect x="1078" y="646" width="1" height="1" fill="#fff" opacity="0.07"></rect><rect x="657" y="294" width="1" height="1" fill="#fff" opacity="0.14"></rect><rect x="1107" y="881" width="1" height="1" fill="#fff" opacity="0.17"></rect><rect x="366" y="532" width="1" height="1" fill="#fff" opacity="0.08"></rect><rect x="893" y="649" width="1" height="1" fill="#fff" opacity="0.18"></rect><rect x="437" y="432" width="1" height="1" fill="#fff" opacity="0.19"></rect><rect x="1113" y="874" width="1" height="1" fill="#fff" opacity="0.19"></rect><rect x="941" y="794" width="1" height="1" fill="#fff" opacity="0.09"></rect><rect x="631" y="525" width="1" height="1" fill="#fff" opacity="0.05"></rect><rect x="125" y="471" width="1" height="1" fill="#fff" opacity="0.09"></rect><rect x="811" y="946" width="1" height="1" fill="#fff" opacity="0.13"></rect><rect x="1064" y="969" width="1" height="1" fill="#fff" opacity="0.21"></rect><rect x="473" y="430" width="1" height="1" fill="#fff" opacity="0.09"></rect><rect x="299" y="418" width="1" height="1" fill="#fff" opacity="0.16"></rect><rect x="1026" y="865" width="1" height="1" fill="#fff" opacity="0.13"></rect><rect x="771" y="836" width="1" height="1" fill="#fff" opacity="0.06"></rect><rect x="778" y="914" width="1" height="1" fill="#fff" opacity="0.18"></rect><rect x="871" y="611" width="1" height="1" fill="#fff" opacity="0.08"></rect><rect x="911" y="508" width="1" height="1" fill="#fff" opacity="0.19"></rect><rect x="1100" y="553" width="1" height="1" fill="#fff" opacity="0.12"></rect><rect x="1074" y="784" width="1" height="1" fill="#fff" opacity="0.08"></rect><rect x="227" y="381" width="1" height="1" fill="#fff" opacity="0.20"></rect><rect x="929" y="378" width="1" height="1" fill="#fff" opacity="0.19"></rect><rect x="1109" y="736" width="1" height="1" fill="#fff" opacity="0.11"></rect><rect x="663" y="367" width="1" height="1" fill="#fff" opacity="0.05"></rect><rect x="1099" y="731" width="1" height="1" fill="#fff" opacity="0.14"></rect><rect x="1060" y="580" width="1" height="1" fill="#fff" opacity="0.20"></rect><rect x="949" y="423" width="1" height="1" fill="#fff" opacity="0.09"></rect><rect x="399" y="444" width="1" height="1" fill="#fff" opacity="0.15"></rect><rect x="364" y="569" width="1" height="1" fill="#fff" opacity="0.07"></rect><rect x="1036" y="523" width="1" height="1" fill="#fff" opacity="0.13"></rect><rect x="699" y="910" width="1" height="1" fill="#fff" opacity="0.12"></rect><rect x="1044" y="627" width="1" height="1" fill="#fff" opacity="0.14"></rect><rect x="637" y="288" width="1" height="1" fill="#fff" opacity="0.12"></rect><rect x="285" y="278" width="1" height="1" fill="#fff" opacity="0.19"></rect><rect x="274" y="607" width="1" height="1" fill="#fff" opacity="0.17"></rect><rect x="671" y="504" width="1" height="1" fill="#fff" opacity="0.14"></rect><rect x="670" y="826" width="1" height="1" fill="#fff" opacity="0.07"></rect><rect x="675" y="449" width="1" height="1" fill="#fff" opacity="0.10"></rect><rect x="894" y="631" width="1" height="1" fill="#fff" opacity="0.15"></rect><rect x="881" y="916" width="1" height="1" fill="#fff" opacity="0.13"></rect><rect x="729" y="630" width="1" height="1" fill="#fff" opacity="0.14"></rect><rect x="812" y="593" width="1" height="1" fill="#fff" opacity="0.14"></rect><rect x="590" y="936" width="1" height="1" fill="#fff" opacity="0.17"></rect><rect x="1001" y="936" width="1" height="1" fill="#fff" opacity="0.09"></rect><rect x="674" y="937" width="1" height="1" fill="#fff" opacity="0.19"></rect><rect x="238" y="360" width="1" height="1" fill="#fff" opacity="0.13"></rect><rect x="171" y="444" width="1" height="1" fill="#fff" opacity="0.06"></rect><rect x="788" y="825" width="1" height="1" fill="#fff" opacity="0.20"></rect><rect x="256" y="778" width="1" height="1" fill="#fff" opacity="0.16"></rect><rect x="244" y="895" width="1" height="1" fill="#fff" opacity="0.21"></rect><rect x="323" y="944" width="1" height="1" fill="#fff" opacity="0.12"></rect><rect x="599" y="970" width="1" height="1" fill="#fff" opacity="0.19"></rect><rect x="263" y="578" width="1" height="1" fill="#fff" opacity="0.14"></rect><rect x="446" y="412" width="1" height="1" fill="#fff" opacity="0.10"></rect><rect x="842" y="289" width="1" height="1" fill="#fff" opacity="0.14"></rect><rect x="551" y="288" width="1" height="1" fill="#fff" opacity="0.11"></rect><rect x="741" y="635" width="1" height="1" fill="#fff" opacity="0.06"></rect><rect x="1114" y="828" width="1" height="1" fill="#fff" opacity="0.22"></rect><rect x="204" y="461" width="1" height="1" fill="#fff" opacity="0.06"></rect><rect x="901" y="465" width="1" height="1" fill="#fff" opacity="0.07"></rect><rect x="532" y="915" width="1" height="1" fill="#fff" opacity="0.19"></rect><rect x="363" y="380" width="1" height="1" fill="#fff" opacity="0.21"></rect><rect x="685" y="767" width="1" height="1" fill="#fff" opacity="0.07"></rect><rect x="155" y="758" width="1" height="1" fill="#fff" opacity="0.12"></rect><rect x="171" y="934" width="1" height="1" fill="#fff" opacity="0.16"></rect><rect x="924" y="334" width="1" height="1" fill="#fff" opacity="0.20"></rect><rect x="165" y="881" width="1" height="1" fill="#fff" opacity="0.13"></rect><rect x="446" y="663" width="1" height="1" fill="#fff" opacity="0.21"></rect><rect x="373" y="366" width="1" height="1" fill="#fff" opacity="0.14"></rect><rect x="342" y="352" width="1" height="1" fill="#fff" opacity="0.08"></rect><rect x="148" y="417" width="1" height="1" fill="#fff" opacity="0.10"></rect><rect x="411" y="808" width="1" height="1" fill="#fff" opacity="0.10"></rect><rect x="613" y="400" width="1" height="1" fill="#fff" opacity="0.11"></rect><rect x="115" y="451" width="1" height="1" fill="#fff" opacity="0.05"></rect><rect x="853" y="662" width="1" height="1" fill="#fff" opacity="0.08"></rect><rect x="586" y="931" width="1" height="1" fill="#fff" opacity="0.07"></rect><rect x="942" y="578" width="1" height="1" fill="#fff" opacity="0.13"></rect><rect x="958" y="551" width="1" height="1" fill="#fff" opacity="0.14"></rect><rect x="806" y="965" width="1" height="1" fill="#fff" opacity="0.11"></rect><rect x="956" y="771" width="1" height="1" fill="#fff" opacity="0.16"></rect><rect x="514" y="519" width="1" height="1" fill="#fff" opacity="0.06"></rect><rect x="230" y="325" width="1" height="1" fill="#fff" opacity="0.18"></rect><rect x="360" y="390" width="1" height="1" fill="#fff" opacity="0.06"></rect><rect x="965" y="886" width="1" height="1" fill="#fff" opacity="0.16"></rect><rect x="387" y="445" width="1" height="1" fill="#fff" opacity="0.10"></rect><rect x="571" y="386" width="1" height="1" fill="#fff" opacity="0.13"></rect><rect x="368" y="950" width="1" height="1" fill="#fff" opacity="0.22"></rect><rect x="661" y="447" width="1" height="1" fill="#fff" opacity="0.21"></rect><rect x="416" y="525" width="1" height="1" fill="#fff" opacity="0.05"></rect><rect x="490" y="608" width="1" height="1" fill="#fff" opacity="0.14"></rect><rect x="304" y="629" width="1" height="1" fill="#fff" opacity="0.05"></rect><rect x="369" y="338" width="1" height="1" fill="#fff" opacity="0.12"></rect><rect x="139" y="291" width="1" height="1" fill="#fff" opacity="0.10"></rect><rect x="336" y="686" width="1" height="1" fill="#fff" opacity="0.14"></rect><rect x="871" y="737" width="1" height="1" fill="#fff" opacity="0.17"></rect><rect x="1004" y="548" width="1" height="1" fill="#fff" opacity="0.11"></rect><rect x="1113" y="380" width="1" height="1" fill="#fff" opacity="0.17"></rect><rect x="760" y="306" width="1" height="1" fill="#fff" opacity="0.19"></rect><rect x="1017" y="715" width="1" height="1" fill="#fff" opacity="0.17"></rect><rect x="935" y="373" width="1" height="1" fill="#fff" opacity="0.14"></rect><rect x="617" y="861" width="1" height="1" fill="#fff" opacity="0.19"></rect><rect x="950" y="685" width="1" height="1" fill="#fff" opacity="0.20"></rect><rect x="801" y="762" width="1" height="1" fill="#fff" opacity="0.09"></rect><rect x="128" y="368" width="1" height="1" fill="#fff" opacity="0.11"></rect><rect x="204" y="862" width="1" height="1" fill="#fff" opacity="0.14"></rect><rect x="744" y="715" width="1" height="1" fill="#fff" opacity="0.17"></rect><rect x="601" y="277" width="1" height="1" fill="#fff" opacity="0.19"></rect><rect x="869" y="628" width="1" height="1" fill="#fff" opacity="0.14"></rect><rect x="777" y="321" width="1" height="1" fill="#fff" opacity="0.18"></rect><rect x="357" y="327" width="1" height="1" fill="#fff" opacity="0.10"></rect><rect x="849" y="419" width="1" height="1" fill="#fff" opacity="0.18"></rect><rect x="1104" y="622" width="1" height="1" fill="#fff" opacity="0.12"></rect><rect x="591" y="755" width="1" height="1" fill="#fff" opacity="0.18"></rect><rect x="733" y="726" width="1" height="1" fill="#fff" opacity="0.06"></rect><rect x="248" y="453" width="1" height="1" fill="#fff" opacity="0.18"></rect><rect x="410" y="674" width="1" height="1" fill="#fff" opacity="0.05"></rect><rect x="159" y="464" width="1" height="1" fill="#fff" opacity="0.16"></rect><rect x="811" y="749" width="1" height="1" fill="#fff" opacity="0.10"></rect><rect x="630" y="601" width="1" height="1" fill="#fff" opacity="0.13"></rect><rect x="218" y="902" width="1" height="1" fill="#fff" opacity="0.08"></rect><rect x="1106" y="932" width="1" height="1" fill="#fff" opacity="0.05"></rect><rect x="570" y="851" width="1" height="1" fill="#fff" opacity="0.21"></rect><rect x="560" y="464" width="1" height="1" fill="#fff" opacity="0.09"></rect><rect x="1073" y="423" width="1" height="1" fill="#fff" opacity="0.15"></rect><rect x="242" y="643" width="1" height="1" fill="#fff" opacity="0.21"></rect><rect x="233" y="851" width="1" height="1" fill="#fff" opacity="0.14"></rect><rect x="1012" y="769" width="1" height="1" fill="#fff" opacity="0.09"></rect><rect x="1023" y="616" width="1" height="1" fill="#fff" opacity="0.05"></rect><rect x="100" y="620" width="1" height="1" fill="#fff" opacity="0.13"></rect><rect x="408" y="374" width="1" height="1" fill="#fff" opacity="0.11"></rect><rect x="423" y="865" width="1" height="1" fill="#fff" opacity="0.05"></rect><rect x="872" y="864" width="1" height="1" fill="#fff" opacity="0.07"></rect><rect x="1053" y="776" width="1" height="1" fill="#fff" opacity="0.20"></rect><rect x="395" y="536" width="1" height="1" fill="#fff" opacity="0.12"></rect><rect x="1128" y="689" width="1" height="1" fill="#fff" opacity="0.11"></rect><rect x="538" y="468" width="1" height="1" fill="#fff" opacity="0.06"></rect><rect x="201" y="861" width="1" height="1" fill="#fff" opacity="0.10"></rect><rect x="1062" y="450" width="1" height="1" fill="#fff" opacity="0.10"></rect><rect x="624" y="408" width="1" height="1" fill="#fff" opacity="0.11"></rect><rect x="1084" y="896" width="1" height="1" fill="#fff" opacity="0.19"></rect><rect x="748" y="916" width="1" height="1" fill="#fff" opacity="0.21"></rect><rect x="663" y="780" width="1" height="1" fill="#fff" opacity="0.06"></rect><rect x="853" y="592" width="1" height="1" fill="#fff" opacity="0.18"></rect><rect x="762" y="476" width="1" height="1" fill="#fff" opacity="0.06"></rect><rect x="1053" y="364" width="1" height="1" fill="#fff" opacity="0.13"></rect><rect x="451" y="484" width="1" height="1" fill="#fff" opacity="0.18"></rect><rect x="1105" y="458" width="1" height="1" fill="#fff" opacity="0.16"></rect><rect x="407" y="666" width="1" height="1" fill="#fff" opacity="0.12"></rect><rect x="269" y="388" width="1" height="1" fill="#fff" opacity="0.09"></rect><rect x="1032" y="624" width="1" height="1" fill="#fff" opacity="0.09"></rect><rect x="1032" y="975" width="1" height="1" fill="#fff" opacity="0.13"></rect><rect x="240" y="410" width="1" height="1" fill="#fff" opacity="0.07"></rect><rect x="449" y="339" width="1" height="1" fill="#fff" opacity="0.09"></rect><rect x="363" y="675" width="1" height="1" fill="#fff" opacity="0.20"></rect><rect x="870" y="565" width="1" height="1" fill="#fff" opacity="0.12"></rect><rect x="637" y="540" width="1" height="1" fill="#fff" opacity="0.11"></rect><rect x="160" y="470" width="1" height="1" fill="#fff" opacity="0.21"></rect><rect x="226" y="628" width="1" height="1" fill="#fff" opacity="0.16"></rect><rect x="987" y="427" width="1" height="1" fill="#fff" opacity="0.10"></rect><rect x="353" y="556" width="1" height="1" fill="#fff" opacity="0.13"></rect><rect x="1081" y="871" width="1" height="1" fill="#fff" opacity="0.20"></rect><rect x="119" y="298" width="1" height="1" fill="#fff" opacity="0.17"></rect><rect x="1021" y="607" width="1" height="1" fill="#fff" opacity="0.15"></rect><rect x="96" y="550" width="1" height="1" fill="#fff" opacity="0.21"></rect><rect x="949" y="876" width="1" height="1" fill="#fff" opacity="0.22"></rect><rect x="353" y="352" width="1" height="1" fill="#fff" opacity="0.08"></rect><rect x="636" y="754" width="1" height="1" fill="#fff" opacity="0.21"></rect><rect x="842" y="729" width="1" height="1" fill="#fff" opacity="0.18"></rect><rect x="568" y="662" width="1" height="1" fill="#fff" opacity="0.06"></rect><rect x="904" y="438" width="1" height="1" fill="#fff" opacity="0.21"></rect><rect x="763" y="488" width="1" height="1" fill="#fff" opacity="0.07"></rect><rect x="356" y="722" width="1" height="1" fill="#fff" opacity="0.17"></rect><rect x="212" y="324" width="1" height="1" fill="#fff" opacity="0.14"></rect><rect x="698" y="547" width="1" height="1" fill="#fff" opacity="0.09"></rect><rect x="717" y="282" width="1" height="1" fill="#fff" opacity="0.10"></rect><rect x="572" y="948" width="1" height="1" fill="#fff" opacity="0.16"></rect><rect x="1009" y="609" width="1" height="1" fill="#fff" opacity="0.09"></rect><rect x="351" y="949" width="1" height="1" fill="#fff" opacity="0.17"></rect><rect x="414" y="290" width="1" height="1" fill="#fff" opacity="0.13"></rect><rect x="793" y="570" width="1" height="1" fill="#fff" opacity="0.09"></rect><rect x="785" y="924" width="1" height="1" fill="#fff" opacity="0.09"></rect><rect x="131" y="512" width="1" height="1" fill="#fff" opacity="0.12"></rect><rect x="801" y="414" width="1" height="1" fill="#fff" opacity="0.19"></rect><rect x="860" y="629" width="1" height="1" fill="#fff" opacity="0.08"></rect><rect x="1098" y="494" width="1" height="1" fill="#fff" opacity="0.19"></rect><rect x="334" y="430" width="1" height="1" fill="#fff" opacity="0.18"></rect><rect x="401" y="943" width="1" height="1" fill="#fff" opacity="0.13"></rect><rect x="289" y="432" width="1" height="1" fill="#fff" opacity="0.12"></rect><rect x="783" y="941" width="1" height="1" fill="#fff" opacity="0.07"></rect><rect x="502" y="424" width="1" height="1" fill="#fff" opacity="0.22"></rect><rect x="243" y="311" width="1" height="1" fill="#fff" opacity="0.06"></rect><rect x="502" y="906" width="1" height="1" fill="#fff" opacity="0.20"></rect><rect x="853" y="975" width="1" height="1" fill="#fff" opacity="0.21"></rect><rect x="436" y="405" width="1" height="1" fill="#fff" opacity="0.21"></rect><rect x="867" y="297" width="1" height="1" fill="#fff" opacity="0.16"></rect><rect x="487" y="537" width="1" height="1" fill="#fff" opacity="0.11"></rect><rect x="271" y="277" width="1" height="1" fill="#fff" opacity="0.10"></rect><rect x="459" y="946" width="1" height="1" fill="#fff" opacity="0.07"></rect><rect x="1092" y="421" width="1" height="1" fill="#fff" opacity="0.11"></rect><rect x="945" y="852" width="1" height="1" fill="#fff" opacity="0.12"></rect><rect x="147" y="607" width="1" height="1" fill="#fff" opacity="0.11"></rect><rect x="1046" y="411" width="1" height="1" fill="#fff" opacity="0.11"></rect><rect x="1023" y="296" width="1" height="1" fill="#fff" opacity="0.12"></rect><rect x="935" y="813" width="1" height="1" fill="#fff" opacity="0.06"></rect><rect x="132" y="319" width="1" height="1" fill="#fff" opacity="0.21"></rect><rect x="361" y="800" width="1" height="1" fill="#fff" opacity="0.20"></rect><rect x="446" y="466" width="1" height="1" fill="#fff" opacity="0.21"></rect><rect x="733" y="459" width="1" height="1" fill="#fff" opacity="0.17"></rect><rect x="423" y="468" width="1" height="1" fill="#fff" opacity="0.05"></rect><rect x="877" y="918" width="1" height="1" fill="#fff" opacity="0.16"></rect><rect x="1070" y="292" width="1" height="1" fill="#fff" opacity="0.09"></rect><rect x="587" y="947" width="1" height="1" fill="#fff" opacity="0.21"></rect><rect x="495" y="451" width="1" height="1" fill="#fff" opacity="0.12"></rect><rect x="606" y="927" width="1" height="1" fill="#fff" opacity="0.08"></rect><rect x="925" y="793" width="1" height="1" fill="#fff" opacity="0.19"></rect><rect x="894" y="701" width="1" height="1" fill="#fff" opacity="0.11"></rect><rect x="426" y="529" width="1" height="1" fill="#fff" opacity="0.18"></rect><rect x="178" y="414" width="1" height="1" fill="#fff" opacity="0.18"></rect><rect x="351" y="320" width="1" height="1" fill="#fff" opacity="0.06"></rect><rect x="667" y="504" width="1" height="1" fill="#fff" opacity="0.22"></rect><rect x="1009" y="968" width="1" height="1" fill="#fff" opacity="0.10"></rect><rect x="183" y="343" width="1" height="1" fill="#fff" opacity="0.13"></rect><rect x="829" y="589" width="1" height="1" fill="#fff" opacity="0.09"></rect><rect x="527" y="710" width="1" height="1" fill="#fff" opacity="0.16"></rect><rect x="869" y="870" width="1" height="1" fill="#fff" opacity="0.16"></rect><rect x="221" y="865" width="1" height="1" fill="#fff" opacity="0.10"></rect><rect x="682" y="537" width="1" height="1" fill="#fff" opacity="0.18"></rect><rect x="302" y="449" width="1" height="1" fill="#fff" opacity="0.09"></rect><rect x="254" y="896" width="1" height="1" fill="#fff" opacity="0.15"></rect><rect x="433" y="553" width="1" height="1" fill="#fff" opacity="0.22"></rect><rect x="620" y="437" width="1" height="1" fill="#fff" opacity="0.19"></rect><rect x="771" y="971" width="1" height="1" fill="#fff" opacity="0.07"></rect><rect x="586" y="850" width="1" height="1" fill="#fff" opacity="0.19"></rect><rect x="1041" y="303" width="1" height="1" fill="#fff" opacity="0.10"></rect><rect x="219" y="408" width="1" height="1" fill="#fff" opacity="0.22"></rect><rect x="698" y="928" width="1" height="1" fill="#fff" opacity="0.11"></rect><rect x="991" y="590" width="1" height="1" fill="#fff" opacity="0.09"></rect><rect x="899" y="939" width="1" height="1" fill="#fff" opacity="0.07"></rect><rect x="712" y="710" width="1" height="1" fill="#fff" opacity="0.09"></rect><rect x="477" y="374" width="1" height="1" fill="#fff" opacity="0.08"></rect><rect x="359" y="696" width="1" height="1" fill="#fff" opacity="0.16"></rect><rect x="306" y="283" width="1" height="1" fill="#fff" opacity="0.11"></rect><rect x="797" y="405" width="1" height="1" fill="#fff" opacity="0.10"></rect><rect x="306" y="833" width="1" height="1" fill="#fff" opacity="0.14"></rect><rect x="161" y="346" width="1" height="1" fill="#fff" opacity="0.12"></rect><rect x="664" y="724" width="1" height="1" fill="#fff" opacity="0.07"></rect><rect x="265" y="763" width="1" height="1" fill="#fff" opacity="0.12"></rect><rect x="389" y="491" width="1" height="1" fill="#fff" opacity="0.21"></rect><rect x="419" y="673" width="1" height="1" fill="#fff" opacity="0.11"></rect><rect x="526" y="882" width="1" height="1" fill="#fff" opacity="0.22"></rect><rect x="472" y="413" width="1" height="1" fill="#fff" opacity="0.17"></rect><rect x="306" y="279" width="1" height="1" fill="#fff" opacity="0.20"></rect><rect x="534" y="851" width="1" height="1" fill="#fff" opacity="0.12"></rect><rect x="1008" y="599" width="1" height="1" fill="#fff" opacity="0.08"></rect><rect x="111" y="662" width="1" height="1" fill="#fff" opacity="0.16"></rect><rect x="1036" y="337" width="1" height="1" fill="#fff" opacity="0.16"></rect><rect x="479" y="629" width="1" height="1" fill="#fff" opacity="0.07"></rect><rect x="389" y="641" width="1" height="1" fill="#fff" opacity="0.21"></rect><rect x="208" y="619" width="1" height="1" fill="#fff" opacity="0.19"></rect><rect x="1095" y="414" width="1" height="1" fill="#fff" opacity="0.07"></rect><rect x="1070" y="960" width="1" height="1" fill="#fff" opacity="0.13"></rect><rect x="151" y="925" width="1" height="1" fill="#fff" opacity="0.12"></rect><rect x="1030" y="710" width="1" height="1" fill="#fff" opacity="0.19"></rect><rect x="262" y="827" width="1" height="1" fill="#fff" opacity="0.09"></rect><rect x="514" y="869" width="1" height="1" fill="#fff" opacity="0.19"></rect><rect x="285" y="428" width="1" height="1" fill="#fff" opacity="0.12"></rect><rect x="631" y="544" width="1" height="1" fill="#fff" opacity="0.07"></rect><rect x="351" y="784" width="1" height="1" fill="#fff" opacity="0.20"></rect><rect x="138" y="670" width="1" height="1" fill="#fff" opacity="0.18"></rect><rect x="135" y="863" width="1" height="1" fill="#fff" opacity="0.07"></rect><rect x="715" y="661" width="1" height="1" fill="#fff" opacity="0.16"></rect><rect x="412" y="570" width="1" height="1" fill="#fff" opacity="0.15"></rect><rect x="536" y="738" width="1" height="1" fill="#fff" opacity="0.13"></rect><rect x="549" y="291" width="1" height="1" fill="#fff" opacity="0.16"></rect><rect x="602" y="440" width="1" height="1" fill="#fff" opacity="0.18"></rect><rect x="902" y="597" width="1" height="1" fill="#fff" opacity="0.08"></rect><rect x="585" y="350" width="1" height="1" fill="#fff" opacity="0.07"></rect><rect x="541" y="339" width="1" height="1" fill="#fff" opacity="0.13"></rect><rect x="623" y="304" width="1" height="1" fill="#fff" opacity="0.16"></rect><rect x="181" y="790" width="1" height="1" fill="#fff" opacity="0.18"></rect><rect x="624" y="313" width="1" height="1" fill="#fff" opacity="0.14"></rect><rect x="486" y="943" width="1" height="1" fill="#fff" opacity="0.07"></rect><rect x="981" y="974" width="1" height="1" fill="#fff" opacity="0.17"></rect><rect x="938" y="411" width="1" height="1" fill="#fff" opacity="0.22"></rect><rect x="604" y="947" width="1" height="1" fill="#fff" opacity="0.21"></rect><rect x="267" y="828" width="1" height="1" fill="#fff" opacity="0.21"></rect><rect x="164" y="521" width="1" height="1" fill="#fff" opacity="0.18"></rect><rect x="260" y="904" width="1" height="1" fill="#fff" opacity="0.10"></rect><rect x="939" y="376" width="1" height="1" fill="#fff" opacity="0.14"></rect><rect x="1046" y="421" width="1" height="1" fill="#fff" opacity="0.09"></rect><rect x="619" y="499" width="1" height="1" fill="#fff" opacity="0.06"></rect><rect x="284" y="388" width="1" height="1" fill="#fff" opacity="0.21"></rect><rect x="798" y="904" width="1" height="1" fill="#fff" opacity="0.08"></rect><rect x="907" y="356" width="1" height="1" fill="#fff" opacity="0.14"></rect><rect x="753" y="528" width="1" height="1" fill="#fff" opacity="0.20"></rect><rect x="670" y="682" width="1" height="1" fill="#fff" opacity="0.20"></rect><rect x="204" y="972" width="1" height="1" fill="#fff" opacity="0.16"></rect><rect x="503" y="835" width="1" height="1" fill="#fff" opacity="0.10"></rect><rect x="1119" y="680" width="1" height="1" fill="#fff" opacity="0.11"></rect><rect x="886" y="585" width="1" height="1" fill="#fff" opacity="0.08"></rect><rect x="864" y="309" width="1" height="1" fill="#fff" opacity="0.19"></rect><rect x="358" y="724" width="1" height="1" fill="#fff" opacity="0.22"></rect><rect x="701" y="741" width="1" height="1" fill="#fff" opacity="0.10"></rect><rect x="98" y="299" width="1" height="1" fill="#fff" opacity="0.08"></rect><rect x="732" y="578" width="1" height="1" fill="#fff" opacity="0.14"></rect><rect x="1021" y="368" width="1" height="1" fill="#fff" opacity="0.09"></rect><rect x="771" y="291" width="1" height="1" fill="#fff" opacity="0.05"></rect><rect x="463" y="350" width="1" height="1" fill="#fff" opacity="0.11"></rect><rect x="328" y="685" width="1" height="1" fill="#fff" opacity="0.15"></rect><rect x="307" y="713" width="1" height="1" fill="#fff" opacity="0.13"></rect><rect x="235" y="932" width="1" height="1" fill="#fff" opacity="0.09"></rect><rect x="250" y="342" width="1" height="1" fill="#fff" opacity="0.16"></rect><rect x="996" y="824" width="1" height="1" fill="#fff" opacity="0.12"></rect><rect x="369" y="283" width="1" height="1" fill="#fff" opacity="0.16"></rect><rect x="677" y="521" width="1" height="1" fill="#fff" opacity="0.16"></rect><rect x="554" y="933" width="1" height="1" fill="#fff" opacity="0.17"></rect><rect x="353" y="909" width="1" height="1" fill="#fff" opacity="0.06"></rect><rect x="645" y="560" width="1" height="1" fill="#fff" opacity="0.09"></rect><rect x="156" y="822" width="1" height="1" fill="#fff" opacity="0.05"></rect><rect x="665" y="936" width="1" height="1" fill="#fff" opacity="0.07"></rect><rect x="302" y="702" width="1" height="1" fill="#fff" opacity="0.14"></rect><rect x="759" y="846" width="1" height="1" fill="#fff" opacity="0.08"></rect><rect x="416" y="486" width="1" height="1" fill="#fff" opacity="0.06"></rect><rect x="1015" y="825" width="1" height="1" fill="#fff" opacity="0.17"></rect><rect x="103" y="868" width="1" height="1" fill="#fff" opacity="0.18"></rect><rect x="577" y="796" width="1" height="1" fill="#fff" opacity="0.13"></rect><rect x="329" y="349" width="1" height="1" fill="#fff" opacity="0.09"></rect><rect x="136" y="511" width="1" height="1" fill="#fff" opacity="0.18"></rect><rect x="814" y="868" width="1" height="1" fill="#fff" opacity="0.17"></rect><rect x="371" y="664" width="1" height="1" fill="#fff" opacity="0.12"></rect><rect x="910" y="642" width="1" height="1" fill="#fff" opacity="0.10"></rect><rect x="759" y="953" width="1" height="1" fill="#fff" opacity="0.09"></rect><rect x="1005" y="286" width="1" height="1" fill="#fff" opacity="0.09"></rect><rect x="340" y="797" width="1" height="1" fill="#fff" opacity="0.21"></rect><rect x="867" y="504" width="1" height="1" fill="#fff" opacity="0.20"></rect><rect x="435" y="443" width="1" height="1" fill="#fff" opacity="0.20"></rect><rect x="748" y="761" width="1" height="1" fill="#fff" opacity="0.16"></rect><rect x="1107" y="605" width="1" height="1" fill="#fff" opacity="0.19"></rect><rect x="817" y="877" width="1" height="1" fill="#fff" opacity="0.12"></rect><rect x="845" y="675" width="1" height="1" fill="#fff" opacity="0.10"></rect><rect x="315" y="712" width="1" height="1" fill="#fff" opacity="0.06"></rect><rect x="1037" y="377" width="1" height="1" fill="#fff" opacity="0.05"></rect><rect x="206" y="927" width="1" height="1" fill="#fff" opacity="0.11"></rect><rect x="243" y="295" width="1" height="1" fill="#fff" opacity="0.06"></rect><rect x="811" y="720" width="1" height="1" fill="#fff" opacity="0.17"></rect><rect x="857" y="321" width="1" height="1" fill="#fff" opacity="0.15"></rect><rect x="471" y="849" width="1" height="1" fill="#fff" opacity="0.19"></rect><rect x="1017" y="321" width="1" height="1" fill="#fff" opacity="0.20"></rect><rect x="1041" y="938" width="1" height="1" fill="#fff" opacity="0.07"></rect><rect x="309" y="354" width="1" height="1" fill="#fff" opacity="0.06"></rect><rect x="972" y="845" width="1" height="1" fill="#fff" opacity="0.16"></rect><rect x="948" y="718" width="1" height="1" fill="#fff" opacity="0.10"></rect><rect x="199" y="344" width="1" height="1" fill="#fff" opacity="0.18"></rect><rect x="308" y="499" width="1" height="1" fill="#fff" opacity="0.12"></rect><rect x="118" y="455" width="1" height="1" fill="#fff" opacity="0.10"></rect><rect x="835" y="533" width="1" height="1" fill="#fff" opacity="0.10"></rect><rect x="1092" y="629" width="1" height="1" fill="#fff" opacity="0.19"></rect><rect x="735" y="297" width="1" height="1" fill="#fff" opacity="0.12"></rect><rect x="547" y="818" width="1" height="1" fill="#fff" opacity="0.11"></rect><rect x="824" y="653" width="1" height="1" fill="#fff" opacity="0.09"></rect><rect x="987" y="339" width="1" height="1" fill="#fff" opacity="0.19"></rect><rect x="272" y="276" width="1" height="1" fill="#fff" opacity="0.08"></rect><rect x="883" y="961" width="1" height="1" fill="#fff" opacity="0.05"></rect><rect x="603" y="620" width="1" height="1" fill="#fff" opacity="0.19"></rect><rect x="287" y="622" width="1" height="1" fill="#fff" opacity="0.11"></rect><rect x="955" y="458" width="1" height="1" fill="#fff" opacity="0.21"></rect><rect x="389" y="426" width="1" height="1" fill="#fff" opacity="0.17"></rect><rect x="611" y="352" width="1" height="1" fill="#fff" opacity="0.16"></rect><rect x="180" y="828" width="1" height="1" fill="#fff" opacity="0.17"></rect><rect x="909" y="716" width="1" height="1" fill="#fff" opacity="0.11"></rect><rect x="511" y="552" width="1" height="1" fill="#fff" opacity="0.20"></rect><rect x="185" y="899" width="1" height="1" fill="#fff" opacity="0.05"></rect><rect x="309" y="460" width="1" height="1" fill="#fff" opacity="0.20"></rect><rect x="614" y="541" width="1" height="1" fill="#fff" opacity="0.20"></rect><rect x="337" y="599" width="1" height="1" fill="#fff" opacity="0.14"></rect><rect x="875" y="804" width="1" height="1" fill="#fff" opacity="0.16"></rect><rect x="456" y="504" width="1" height="1" fill="#fff" opacity="0.08"></rect><rect x="967" y="740" width="1" height="1" fill="#fff" opacity="0.18"></rect><rect x="271" y="583" width="1" height="1" fill="#fff" opacity="0.18"></rect><rect x="694" y="363" width="1" height="1" fill="#fff" opacity="0.13"></rect><rect x="1010" y="442" width="1" height="1" fill="#fff" opacity="0.08"></rect><rect x="407" y="769" width="1" height="1" fill="#fff" opacity="0.19"></rect><rect x="256" y="385" width="1" height="1" fill="#fff" opacity="0.09"></rect><rect x="433" y="642" width="1" height="1" fill="#fff" opacity="0.08"></rect><rect x="435" y="408" width="1" height="1" fill="#fff" opacity="0.22"></rect><rect x="849" y="346" width="1" height="1" fill="#fff" opacity="0.21"></rect><rect x="201" y="545" width="1" height="1" fill="#fff" opacity="0.22"></rect><rect x="917" y="790" width="1" height="1" fill="#fff" opacity="0.12"></rect><rect x="299" y="723" width="1" height="1" fill="#fff" opacity="0.07"></rect><rect x="309" y="548" width="1" height="1" fill="#fff" opacity="0.06"></rect><rect x="508" y="830" width="1" height="1" fill="#fff" opacity="0.17"></rect><rect x="613" y="719" width="1" height="1" fill="#fff" opacity="0.13"></rect><rect x="242" y="699" width="1" height="1" fill="#fff" opacity="0.12"></rect><rect x="861" y="912" width="1" height="1" fill="#fff" opacity="0.12"></rect><rect x="689" y="801" width="1" height="1" fill="#fff" opacity="0.12"></rect><rect x="332" y="782" width="1" height="1" fill="#fff" opacity="0.20"></rect><rect x="896" y="766" width="1" height="1" fill="#fff" opacity="0.19"></rect><rect x="798" y="725" width="1" height="1" fill="#fff" opacity="0.13"></rect><rect x="419" y="716" width="1" height="1" fill="#fff" opacity="0.07"></rect><rect x="529" y="824" width="1" height="1" fill="#fff" opacity="0.17"></rect><rect x="746" y="451" width="1" height="1" fill="#fff" opacity="0.12"></rect><rect x="566" y="711" width="1" height="1" fill="#fff" opacity="0.12"></rect><rect x="794" y="928" width="1" height="1" fill="#fff" opacity="0.08"></rect><rect x="772" y="821" width="1" height="1" fill="#fff" opacity="0.12"></rect><rect x="602" y="959" width="1" height="1" fill="#fff" opacity="0.06"></rect><rect x="657" y="388" width="1" height="1" fill="#fff" opacity="0.18"></rect><rect x="1068" y="639" width="1" height="1" fill="#fff" opacity="0.07"></rect><rect x="690" y="655" width="1" height="1" fill="#fff" opacity="0.17"></rect><rect x="625" y="724" width="1" height="1" fill="#fff" opacity="0.19"></rect><rect x="635" y="563" width="1" height="1" fill="#fff" opacity="0.21"></rect><rect x="313" y="755" width="1" height="1" fill="#fff" opacity="0.12"></rect><rect x="884" y="361" width="1" height="1" fill="#fff" opacity="0.22"></rect><rect x="463" y="315" width="1" height="1" fill="#fff" opacity="0.10"></rect><rect x="509" y="284" width="1" height="1" fill="#fff" opacity="0.12"></rect><rect x="530" y="765" width="1" height="1" fill="#fff" opacity="0.11"></rect><rect x="370" y="433" width="1" height="1" fill="#fff" opacity="0.18"></rect><rect x="1067" y="645" width="1" height="1" fill="#fff" opacity="0.09"></rect><rect x="924" y="550" width="1" height="1" fill="#fff" opacity="0.09"></rect><rect x="230" y="820" width="1" height="1" fill="#fff" opacity="0.19"></rect><rect x="751" y="604" width="1" height="1" fill="#fff" opacity="0.15"></rect><rect x="329" y="952" width="1" height="1" fill="#fff" opacity="0.11"></rect><rect x="756" y="850" width="1" height="1" fill="#fff" opacity="0.19"></rect><rect x="580" y="482" width="1" height="1" fill="#fff" opacity="0.14"></rect><rect x="225" y="860" width="1" height="1" fill="#fff" opacity="0.11"></rect><rect x="975" y="463" width="1" height="1" fill="#fff" opacity="0.11"></rect><rect x="358" y="574" width="1" height="1" fill="#fff" opacity="0.08"></rect><rect x="99" y="782" width="1" height="1" fill="#fff" opacity="0.10"></rect><rect x="349" y="487" width="1" height="1" fill="#fff" opacity="0.13"></rect><rect x="539" y="722" width="1" height="1" fill="#fff" opacity="0.16"></rect><rect x="470" y="927" width="1" height="1" fill="#fff" opacity="0.20"></rect><rect x="155" y="856" width="1" height="1" fill="#fff" opacity="0.20"></rect><rect x="906" y="374" width="1" height="1" fill="#fff" opacity="0.19"></rect><rect x="750" y="286" width="1" height="1" fill="#fff" opacity="0.05"></rect><rect x="1079" y="735" width="1" height="1" fill="#fff" opacity="0.09"></rect><rect x="201" y="375" width="1" height="1" fill="#fff" opacity="0.09"></rect><rect x="898" y="518" width="1" height="1" fill="#fff" opacity="0.08"></rect><rect x="1030" y="831" width="1" height="1" fill="#fff" opacity="0.08"></rect><rect x="1017" y="702" width="1" height="1" fill="#fff" opacity="0.18"></rect><rect x="787" y="903" width="1" height="1" fill="#fff" opacity="0.18"></rect><rect x="962" y="414" width="1" height="1" fill="#fff" opacity="0.17"></rect><rect x="644" y="796" width="1" height="1" fill="#fff" opacity="0.12"></rect><rect x="1008" y="665" width="1" height="1" fill="#fff" opacity="0.09"></rect><rect x="338" y="373" width="1" height="1" fill="#fff" opacity="0.13"></rect><rect x="156" y="603" width="1" height="1" fill="#fff" opacity="0.07"></rect><rect x="604" y="625" width="1" height="1" fill="#fff" opacity="0.14"></rect><rect x="987" y="280" width="1" height="1" fill="#fff" opacity="0.19"></rect><rect x="579" y="670" width="1" height="1" fill="#fff" opacity="0.16"></rect><rect x="964" y="538" width="1" height="1" fill="#fff" opacity="0.12"></rect><rect x="1088" y="328" width="1" height="1" fill="#fff" opacity="0.16"></rect><rect x="753" y="295" width="1" height="1" fill="#fff" opacity="0.15"></rect><rect x="801" y="929" width="1" height="1" fill="#fff" opacity="0.11"></rect><rect x="1110" y="633" width="1" height="1" fill="#fff" opacity="0.13"></rect><rect x="1023" y="299" width="1" height="1" fill="#fff" opacity="0.17"></rect><rect x="742" y="513" width="1" height="1" fill="#fff" opacity="0.20"></rect><rect x="474" y="608" width="1" height="1" fill="#fff" opacity="0.14"></rect><rect x="892" y="423" width="1" height="1" fill="#fff" opacity="0.12"></rect><rect x="532" y="664" width="1" height="1" fill="#fff" opacity="0.19"></rect><rect x="399" y="856" width="1" height="1" fill="#fff" opacity="0.12"></rect><rect x="616" y="466" width="1" height="1" fill="#fff" opacity="0.14"></rect><rect x="1103" y="735" width="1" height="1" fill="#fff" opacity="0.18"></rect><rect x="438" y="498" width="1" height="1" fill="#fff" opacity="0.10"></rect><rect x="702" y="721" width="1" height="1" fill="#fff" opacity="0.18"></rect><rect x="137" y="782" width="1" height="1" fill="#fff" opacity="0.20"></rect><rect x="659" y="310" width="1" height="1" fill="#fff" opacity="0.10"></rect><rect x="102" y="408" width="1" height="1" fill="#fff" opacity="0.21"></rect><rect x="725" y="737" width="1" height="1" fill="#fff" opacity="0.18"></rect><rect x="1036" y="704" width="1" height="1" fill="#fff" opacity="0.15"></rect><rect x="743" y="764" width="1" height="1" fill="#fff" opacity="0.15"></rect><rect x="799" y="424" width="1" height="1" fill="#fff" opacity="0.16"></rect><rect x="569" y="810" width="1" height="1" fill="#fff" opacity="0.07"></rect><rect x="283" y="301" width="1" height="1" fill="#fff" opacity="0.18"></rect><rect x="1040" y="735" width="1" height="1" fill="#fff" opacity="0.11"></rect><rect x="946" y="827" width="1" height="1" fill="#fff" opacity="0.15"></rect><rect x="363" y="487" width="1" height="1" fill="#fff" opacity="0.12"></rect><rect x="425" y="577" width="1" height="1" fill="#fff" opacity="0.16"></rect><rect x="1061" y="313" width="1" height="1" fill="#fff" opacity="0.15"></rect><rect x="137" y="358" width="1" height="1" fill="#fff" opacity="0.19"></rect><rect x="690" y="920" width="1" height="1" fill="#fff" opacity="0.13"></rect><rect x="111" y="547" width="1" height="1" fill="#fff" opacity="0.15"></rect><rect x="1065" y="964" width="1" height="1" fill="#fff" opacity="0.13"></rect><rect x="522" y="347" width="1" height="1" fill="#fff" opacity="0.16"></rect><rect x="315" y="382" width="1" height="1" fill="#fff" opacity="0.05"></rect><rect x="101" y="755" width="1" height="1" fill="#fff" opacity="0.07"></rect><rect x="1094" y="337" width="1" height="1" fill="#fff" opacity="0.20"></rect><rect x="229" y="287" width="1" height="1" fill="#fff" opacity="0.17"></rect><rect x="346" y="790" width="1" height="1" fill="#fff" opacity="0.08"></rect><rect x="148" y="818" width="1" height="1" fill="#fff" opacity="0.17"></rect><rect x="980" y="787" width="1" height="1" fill="#fff" opacity="0.06"></rect><rect x="745" y="773" width="1" height="1" fill="#fff" opacity="0.13"></rect><rect x="1059" y="453" width="1" height="1" fill="#fff" opacity="0.21"></rect><rect x="837" y="283" width="1" height="1" fill="#fff" opacity="0.05"></rect><rect x="768" y="849" width="1" height="1" fill="#fff" opacity="0.06"></rect><rect x="417" y="787" width="1" height="1" fill="#fff" opacity="0.08"></rect><rect x="985" y="616" width="1" height="1" fill="#fff" opacity="0.06"></rect><rect x="476" y="679" width="1" height="1" fill="#fff" opacity="0.12"></rect><rect x="795" y="377" width="1" height="1" fill="#fff" opacity="0.19"></rect><rect x="471" y="728" width="1" height="1" fill="#fff" opacity="0.16"></rect><rect x="528" y="546" width="1" height="1" fill="#fff" opacity="0.18"></rect><rect x="1072" y="826" width="1" height="1" fill="#fff" opacity="0.15"></rect><rect x="398" y="318" width="1" height="1" fill="#fff" opacity="0.22"></rect><rect x="822" y="856" width="1" height="1" fill="#fff" opacity="0.11"></rect><rect x="722" y="961" width="1" height="1" fill="#fff" opacity="0.19"></rect><rect x="717" y="492" width="1" height="1" fill="#fff" opacity="0.12"></rect><rect x="1013" y="539" width="1" height="1" fill="#fff" opacity="0.17"></rect><rect x="718" y="904" width="1" height="1" fill="#fff" opacity="0.19"></rect><rect x="389" y="276" width="1" height="1" fill="#fff" opacity="0.09"></rect><rect x="532" y="687" width="1" height="1" fill="#fff" opacity="0.19"></rect><rect x="1013" y="305" width="1" height="1" fill="#fff" opacity="0.19"></rect><rect x="935" y="884" width="1" height="1" fill="#fff" opacity="0.15"></rect><rect x="379" y="873" width="1" height="1" fill="#fff" opacity="0.19"></rect><rect x="803" y="916" width="1" height="1" fill="#fff" opacity="0.11"></rect><rect x="184" y="664" width="1" height="1" fill="#fff" opacity="0.19"></rect><rect x="303" y="802" width="1" height="1" fill="#fff" opacity="0.21"></rect><rect x="338" y="701" width="1" height="1" fill="#fff" opacity="0.17"></rect><rect x="577" y="420" width="1" height="1" fill="#fff" opacity="0.09"></rect><rect x="872" y="831" width="1" height="1" fill="#fff" opacity="0.13"></rect><rect x="187" y="841" width="1" height="1" fill="#fff" opacity="0.18"></rect><rect x="337" y="682" width="1" height="1" fill="#fff" opacity="0.20"></rect><rect x="1010" y="641" width="1" height="1" fill="#fff" opacity="0.13"></rect><rect x="705" y="408" width="1" height="1" fill="#fff" opacity="0.08"></rect><rect x="283" y="767" width="1" height="1" fill="#fff" opacity="0.11"></rect><rect x="679" y="558" width="1" height="1" fill="#fff" opacity="0.14"></rect><rect x="250" y="306" width="1" height="1" fill="#fff" opacity="0.22"></rect><rect x="482" y="349" width="1" height="1" fill="#fff" opacity="0.16"></rect><rect x="909" y="385" width="1" height="1" fill="#fff" opacity="0.15"></rect><rect x="452" y="640" width="1" height="1" fill="#fff" opacity="0.05"></rect><rect x="131" y="970" width="1" height="1" fill="#fff" opacity="0.20"></rect><rect x="598" y="673" width="1" height="1" fill="#fff" opacity="0.09"></rect><rect x="901" y="574" width="1" height="1" fill="#fff" opacity="0.21"></rect><rect x="889" y="850" width="1" height="1" fill="#fff" opacity="0.21"></rect><rect x="358" y="302" width="1" height="1" fill="#fff" opacity="0.08"></rect><rect x="283" y="334" width="1" height="1" fill="#fff" opacity="0.06"></rect><rect x="672" y="886" width="1" height="1" fill="#fff" opacity="0.13"></rect><rect x="1074" y="914" width="1" height="1" fill="#fff" opacity="0.06"></rect><rect x="714" y="554" width="1" height="1" fill="#fff" opacity="0.07"></rect><rect x="1087" y="456" width="1" height="1" fill="#fff" opacity="0.15"></rect><rect x="758" y="946" width="1" height="1" fill="#fff" opacity="0.16"></rect><rect x="502" y="590" width="1" height="1" fill="#fff" opacity="0.08"></rect><rect x="1094" y="971" width="1" height="1" fill="#fff" opacity="0.09"></rect><rect x="136" y="455" width="1" height="1" fill="#fff" opacity="0.11"></rect><rect x="1029" y="910" width="1" height="1" fill="#fff" opacity="0.19"></rect><rect x="145" y="827" width="1" height="1" fill="#fff" opacity="0.17"></rect><rect x="764" y="967" width="1" height="1" fill="#fff" opacity="0.06"></rect><rect x="246" y="805" width="1" height="1" fill="#fff" opacity="0.21"></rect><rect x="795" y="485" width="1" height="1" fill="#fff" opacity="0.15"></rect><rect x="879" y="349" width="1" height="1" fill="#fff" opacity="0.11"></rect><rect x="361" y="362" width="1" height="1" fill="#fff" opacity="0.13"></rect><rect x="270" y="442" width="1" height="1" fill="#fff" opacity="0.07"></rect><rect x="796" y="284" width="1" height="1" fill="#fff" opacity="0.17"></rect><rect x="298" y="300" width="1" height="1" fill="#fff" opacity="0.21"></rect><rect x="324" y="931" width="1" height="1" fill="#fff" opacity="0.20"></rect><rect x="1014" y="373" width="1" height="1" fill="#fff" opacity="0.13"></rect><rect x="196" y="927" width="1" height="1" fill="#fff" opacity="0.19"></rect><rect x="745" y="593" width="1" height="1" fill="#fff" opacity="0.11"></rect><rect x="946" y="610" width="1" height="1" fill="#fff" opacity="0.16"></rect><rect x="243" y="431" width="1" height="1" fill="#fff" opacity="0.06"></rect><rect x="833" y="663" width="1" height="1" fill="#fff" opacity="0.07"></rect><rect x="995" y="462" width="1" height="1" fill="#fff" opacity="0.12"></rect><rect x="257" y="465" width="1" height="1" fill="#fff" opacity="0.19"></rect><rect x="442" y="393" width="1" height="1" fill="#fff" opacity="0.13"></rect><rect x="425" y="909" width="1" height="1" fill="#fff" opacity="0.07"></rect><rect x="1107" y="315" width="1" height="1" fill="#fff" opacity="0.20"></rect><rect x="786" y="423" width="1" height="1" fill="#fff" opacity="0.13"></rect><rect x="392" y="456" width="1" height="1" fill="#fff" opacity="0.08"></rect><rect x="472" y="971" width="1" height="1" fill="#fff" opacity="0.22"></rect><rect x="1052" y="343" width="1" height="1" fill="#fff" opacity="0.10"></rect><rect x="1022" y="315" width="1" height="1" fill="#fff" opacity="0.17"></rect><rect x="399" y="962" width="1" height="1" fill="#fff" opacity="0.05"></rect><rect x="930" y="514" width="1" height="1" fill="#fff" opacity="0.07"></rect><rect x="98" y="859" width="1" height="1" fill="#fff" opacity="0.14"></rect><rect x="288" y="581" width="1" height="1" fill="#fff" opacity="0.21"></rect><rect x="321" y="676" width="1" height="1" fill="#fff" opacity="0.07"></rect><rect x="282" y="816" width="1" height="1" fill="#fff" opacity="0.17"></rect><rect x="299" y="331" width="1" height="1" fill="#fff" opacity="0.06"></rect><rect x="725" y="623" width="1" height="1" fill="#fff" opacity="0.10"></rect><rect x="309" y="705" width="1" height="1" fill="#fff" opacity="0.17"></rect><rect x="934" y="684" width="1" height="1" fill="#fff" opacity="0.08"></rect><rect x="164" y="789" width="1" height="1" fill="#fff" opacity="0.12"></rect><rect x="841" y="314" width="1" height="1" fill="#fff" opacity="0.19"></rect><rect x="442" y="866" width="1" height="1" fill="#fff" opacity="0.20"></rect><rect x="605" y="286" width="1" height="1" fill="#fff" opacity="0.20"></rect><rect x="588" y="887" width="1" height="1" fill="#fff" opacity="0.10"></rect><rect x="288" y="859" width="1" height="1" fill="#fff" opacity="0.11"></rect><rect x="265" y="536" width="1" height="1" fill="#fff" opacity="0.15"></rect><rect x="101" y="640" width="1" height="1" fill="#fff" opacity="0.13"></rect><rect x="629" y="360" width="1" height="1" fill="#fff" opacity="0.17"></rect><rect x="939" y="883" width="1" height="1" fill="#fff" opacity="0.10"></rect><rect x="831" y="543" width="1" height="1" fill="#fff" opacity="0.18"></rect><rect x="159" y="888" width="1" height="1" fill="#fff" opacity="0.21"></rect><rect x="607" y="635" width="1" height="1" fill="#fff" opacity="0.14"></rect><rect x="651" y="290" width="1" height="1" fill="#fff" opacity="0.21"></rect><rect x="327" y="403" width="1" height="1" fill="#fff" opacity="0.07"></rect><rect x="355" y="849" width="1" height="1" fill="#fff" opacity="0.06"></rect><rect x="196" y="766" width="1" height="1" fill="#fff" opacity="0.08"></rect><rect x="114" y="696" width="1" height="1" fill="#fff" opacity="0.15"></rect><rect x="636" y="768" width="1" height="1" fill="#fff" opacity="0.07"></rect><rect x="994" y="778" width="1" height="1" fill="#fff" opacity="0.06"></rect><rect x="223" y="622" width="1" height="1" fill="#fff" opacity="0.14"></rect><rect x="385" y="361" width="1" height="1" fill="#fff" opacity="0.12"></rect><rect x="237" y="690" width="1" height="1" fill="#fff" opacity="0.20"></rect><rect x="248" y="677" width="1" height="1" fill="#fff" opacity="0.18"></rect><rect x="266" y="855" width="1" height="1" fill="#fff" opacity="0.21"></rect><rect x="498" y="570" width="1" height="1" fill="#fff" opacity="0.19"></rect><rect x="639" y="553" width="1" height="1" fill="#fff" opacity="0.21"></rect><rect x="899" y="513" width="1" height="1" fill="#fff" opacity="0.09"></rect><rect x="442" y="581" width="1" height="1" fill="#fff" opacity="0.22"></rect><rect x="927" y="916" width="1" height="1" fill="#fff" opacity="0.19"></rect><rect x="972" y="313" width="1" height="1" fill="#fff" opacity="0.14"></rect><rect x="1085" y="931" width="1" height="1" fill="#fff" opacity="0.09"></rect><rect x="532" y="719" width="1" height="1" fill="#fff" opacity="0.11"></rect><rect x="644" y="324" width="1" height="1" fill="#fff" opacity="0.12"></rect><rect x="617" y="290" width="1" height="1" fill="#fff" opacity="0.07"></rect><rect x="1098" y="820" width="1" height="1" fill="#fff" opacity="0.21"></rect><rect x="750" y="843" width="1" height="1" fill="#fff" opacity="0.20"></rect><rect x="1010" y="299" width="1" height="1" fill="#fff" opacity="0.16"></rect><rect x="371" y="751" width="1" height="1" fill="#fff" opacity="0.10"></rect><rect x="656" y="924" width="1" height="1" fill="#fff" opacity="0.16"></rect><rect x="355" y="640" width="1" height="1" fill="#fff" opacity="0.12"></rect><rect x="1078" y="477" width="1" height="1" fill="#fff" opacity="0.10"></rect><rect x="765" y="360" width="1" height="1" fill="#fff" opacity="0.15"></rect><rect x="1084" y="636" width="1" height="1" fill="#fff" opacity="0.10"></rect><rect x="578" y="650" width="1" height="1" fill="#fff" opacity="0.08"></rect><rect x="224" y="367" width="1" height="1" fill="#fff" opacity="0.10"></rect><rect x="516" y="477" width="1" height="1" fill="#fff" opacity="0.09"></rect><rect x="187" y="659" width="1" height="1" fill="#fff" opacity="0.19"></rect><rect x="726" y="675" width="1" height="1" fill="#fff" opacity="0.16"></rect><rect x="304" y="774" width="1" height="1" fill="#fff" opacity="0.13"></rect><rect x="662" y="705" width="1" height="1" fill="#fff" opacity="0.13"></rect><rect x="417" y="445" width="1" height="1" fill="#fff" opacity="0.09"></rect><rect x="625" y="544" width="1" height="1" fill="#fff" opacity="0.15"></rect><rect x="108" y="523" width="1" height="1" fill="#fff" opacity="0.20"></rect><rect x="342" y="666" width="1" height="1" fill="#fff" opacity="0.13"></rect><rect x="390" y="968" width="1" height="1" fill="#fff" opacity="0.10"></rect><rect x="894" y="386" width="1" height="1" fill="#fff" opacity="0.06"></rect><rect x="996" y="584" width="1" height="1" fill="#fff" opacity="0.06"></rect><rect x="497" y="584" width="1" height="1" fill="#fff" opacity="0.18"></rect><rect x="209" y="433" width="1" height="1" fill="#fff" opacity="0.21"></rect><rect x="859" y="383" width="1" height="1" fill="#fff" opacity="0.11"></rect><rect x="460" y="749" width="1" height="1" fill="#fff" opacity="0.15"></rect><rect x="974" y="851" width="1" height="1" fill="#fff" opacity="0.14"></rect><rect x="859" y="797" width="1" height="1" fill="#fff" opacity="0.18"></rect><rect x="587" y="826" width="1" height="1" fill="#fff" opacity="0.17"></rect><rect x="1041" y="364" width="1" height="1" fill="#fff" opacity="0.20"></rect><rect x="100" y="813" width="1" height="1" fill="#fff" opacity="0.15"></rect><rect x="610" y="951" width="1" height="1" fill="#fff" opacity="0.15"></rect><rect x="528" y="825" width="1" height="1" fill="#fff" opacity="0.20"></rect><rect x="723" y="541" width="1" height="1" fill="#fff" opacity="0.13"></rect><rect x="569" y="783" width="1" height="1" fill="#fff" opacity="0.10"></rect><circle cx="570" cy="557" r="2.4" fill="#fff" opacity="0.25"></circle><circle cx="570" cy="557" r="1.4" fill="#fff"></circle><circle cx="632" cy="577" r="2.4" fill="#fff" opacity="0.25"></circle><circle cx="632" cy="577" r="1.4" fill="#fff"></circle><circle cx="573" cy="589" r="2.4" fill="#fff" opacity="0.25"></circle><circle cx="573" cy="589" r="1.4" fill="#fff"></circle><circle cx="629" cy="643" r="2.3" fill="#fff" opacity="0.25"></circle><circle cx="629" cy="643" r="1.4" fill="#fff"></circle><circle cx="580" cy="670" r="2.6" fill="#fff" opacity="0.25"></circle><circle cx="580" cy="670" r="1.6" fill="#fff"></circle><circle cx="554" cy="736" r="2.3" fill="#fff" opacity="0.25"></circle><circle cx="554" cy="736" r="1.4" fill="#fff"></circle><circle cx="511" cy="523" r="2.0" fill="#fff" opacity="0.25"></circle><circle cx="511" cy="523" r="1.1" fill="#fff"></circle><circle cx="430" cy="614" r="1.9" fill="#fff" opacity="0.25"></circle><circle cx="430" cy="614" r="1.0" fill="#fff"></circle><circle cx="290" cy="639" r="1.9" fill="#fff" opacity="0.25"></circle><circle cx="290" cy="639" r="1.0" fill="#fff"></circle><circle cx="822" cy="925" r="1.9" fill="#fff" opacity="0.25"></circle><circle cx="822" cy="925" r="1.0" fill="#fff"></circle><circle cx="606" cy="559" r="2.0" fill="#fff" opacity="0.25"></circle><circle cx="606" cy="559" r="1.1" fill="#fff"></circle><circle cx="541" cy="729" r="1.9" fill="#fff" opacity="0.25"></circle><circle cx="541" cy="729" r="1.0" fill="#fff"></circle><circle cx="542" cy="575" r="1.7" fill="#fff" opacity="0.25"></circle><circle cx="542" cy="575" r="0.9" fill="#fff"></circle><circle cx="543" cy="582" r="1.6" fill="#fff" opacity="0.25"></circle><circle cx="543" cy="582" r="0.8" fill="#fff"></circle><circle cx="670" cy="763" r="1.7" fill="#fff" opacity="0.25"></circle><circle cx="670" cy="763" r="0.9" fill="#fff"></circle><circle cx="522" cy="322" r="1.8" fill="#fff" opacity="0.25"></circle><circle cx="522" cy="322" r="1.0" fill="#fff"></circle><circle cx="655" cy="318" r="1.6" fill="#fff" opacity="0.25"></circle><circle cx="655" cy="318" r="0.8" fill="#fff"></circle><circle cx="832" cy="290" r="1.6" fill="#fff" opacity="0.25"></circle><circle cx="832" cy="290" r="0.8" fill="#fff"></circle><circle cx="497" cy="350" r="1.6" fill="#fff" opacity="0.25"></circle><circle cx="497" cy="350" r="0.8" fill="#fff"></circle><circle cx="420" cy="375" r="1.6" fill="#fff" opacity="0.25"></circle><circle cx="420" cy="375" r="0.8" fill="#fff"></circle><circle cx="369" cy="389" r="1.6" fill="#fff" opacity="0.25"></circle><circle cx="369" cy="389" r="0.8" fill="#fff"></circle><circle cx="563" cy="370" r="1.6" fill="#fff" opacity="0.25"></circle><circle cx="563" cy="370" r="0.8" fill="#fff"></circle><circle cx="606" cy="395" r="1.6" fill="#fff" opacity="0.25"></circle><circle cx="606" cy="395" r="0.8" fill="#fff"></circle><circle cx="380" cy="465" r="1.6" fill="#fff" opacity="0.25"></circle><circle cx="380" cy="465" r="0.8" fill="#fff"></circle><circle cx="207" cy="743" r="1.6" fill="#fff" opacity="0.25"></circle><circle cx="207" cy="743" r="0.8" fill="#fff"></circle><circle cx="149" cy="604" r="1.6" fill="#fff" opacity="0.25"></circle><circle cx="149" cy="604" r="0.8" fill="#fff"></circle><circle cx="172" cy="478" r="1.6" fill="#fff" opacity="0.25"></circle><circle cx="172" cy="478" r="0.8" fill="#fff"></circle><circle cx="194" cy="910" r="1.6" fill="#fff" opacity="0.25"></circle><circle cx="194" cy="910" r="0.8" fill="#fff"></circle><circle cx="710" cy="965" r="1.6" fill="#fff" opacity="0.25"></circle><circle cx="710" cy="965" r="0.8" fill="#fff"></circle><circle cx="1003" cy="944" r="1.6" fill="#fff" opacity="0.25"></circle><circle cx="1003" cy="944" r="0.8" fill="#fff"></circle><circle cx="1072" cy="855" r="1.6" fill="#fff" opacity="0.25"></circle><circle cx="1072" cy="855" r="0.8" fill="#fff"></circle><circle cx="782" cy="889" r="1.6" fill="#fff" opacity="0.25"></circle><circle cx="782" cy="889" r="0.8" fill="#fff"></circle><circle cx="765" cy="899" r="1.6" fill="#fff" opacity="0.25"></circle><circle cx="765" cy="899" r="0.8" fill="#fff"></circle><circle cx="650" cy="697" r="1.6" fill="#fff" opacity="0.25"></circle><circle cx="650" cy="697" r="0.8" fill="#fff"></circle><circle cx="644" cy="728" r="1.6" fill="#fff" opacity="0.25"></circle><circle cx="644" cy="728" r="0.8" fill="#fff"></circle><circle cx="498" cy="712" r="1.6" fill="#fff" opacity="0.25"></circle><circle cx="498" cy="712" r="0.8" fill="#fff"></circle><circle cx="570" cy="783" r="1.6" fill="#fff" opacity="0.25"></circle><circle cx="570" cy="783" r="0.8" fill="#fff"></circle><circle cx="596" cy="786" r="1.6" fill="#fff" opacity="0.25"></circle><circle cx="596" cy="786" r="0.8" fill="#fff"></circle><circle cx="535" cy="806" r="1.6" fill="#fff" opacity="0.25"></circle><circle cx="535" cy="806" r="0.8" fill="#fff"></circle><circle cx="692" cy="803" r="1.6" fill="#fff" opacity="0.25"></circle><circle cx="692" cy="803" r="0.8" fill="#fff"></circle><circle cx="895" cy="600" r="1.6" fill="#fff" opacity="0.25"></circle><circle cx="895" cy="600" r="0.8" fill="#fff"></circle><circle cx="985" cy="558" r="1.6" fill="#fff" opacity="0.25"></circle><circle cx="985" cy="558" r="0.8" fill="#fff"></circle><circle cx="1107" cy="570" r="1.6" fill="#fff" opacity="0.25"></circle><circle cx="1107" cy="570" r="0.8" fill="#fff"></circle><circle cx="1125" cy="747" r="1.6" fill="#fff" opacity="0.25"></circle><circle cx="1125" cy="747" r="0.8" fill="#fff"></circle><circle cx="866" cy="651" r="1.6" fill="#fff" opacity="0.25"></circle><circle cx="866" cy="651" r="0.8" fill="#fff"></circle><circle cx="1054" cy="718" r="1.6" fill="#fff" opacity="0.25"></circle><circle cx="1054" cy="718" r="0.8" fill="#fff"></circle><circle cx="334" cy="716" r="1.6" fill="#fff" opacity="0.25"></circle><circle cx="334" cy="716" r="0.8" fill="#fff"></circle><circle cx="317" cy="743" r="1.6" fill="#fff" opacity="0.25"></circle><circle cx="317" cy="743" r="0.8" fill="#fff"></circle><circle cx="590" cy="745" r="1.6" fill="#fff" opacity="0.25"></circle><circle cx="590" cy="745" r="0.8" fill="#fff"></circle><circle cx="580" cy="664" r="1.6" fill="#fff" opacity="0.25"></circle><circle cx="580" cy="664" r="0.8" fill="#fff"></circle><circle cx="191" cy="659" r="1.4" fill="#fff" opacity="0.25"></circle><circle cx="191" cy="659" r="0.6" fill="#fff"></circle><circle cx="218" cy="665" r="1.4" fill="#fff" opacity="0.25"></circle><circle cx="218" cy="665" r="0.6" fill="#fff"></circle><circle cx="260" cy="671" r="1.4" fill="#fff" opacity="0.25"></circle><circle cx="260" cy="671" r="0.6" fill="#fff"></circle><circle cx="200" cy="739" r="1.4" fill="#fff" opacity="0.25"></circle><circle cx="200" cy="739" r="0.6" fill="#fff"></circle><circle cx="526" cy="616" r="1.4" fill="#fff" opacity="0.25"></circle><circle cx="526" cy="616" r="0.6" fill="#fff"></circle><circle cx="591" cy="618" r="1.4" fill="#fff" opacity="0.25"></circle><circle cx="591" cy="618" r="0.6" fill="#fff"></circle><circle cx="577" cy="620" r="1.4" fill="#fff" opacity="0.25"></circle><circle cx="577" cy="620" r="0.6" fill="#fff"></circle><circle cx="551" cy="655" r="1.4" fill="#fff" opacity="0.25"></circle><circle cx="551" cy="655" r="0.6" fill="#fff"></circle><circle cx="522" cy="686" r="1.4" fill="#fff" opacity="0.25"></circle><circle cx="522" cy="686" r="0.6" fill="#fff"></circle><circle cx="612" cy="686" r="1.4" fill="#fff" opacity="0.25"></circle><circle cx="612" cy="686" r="0.6" fill="#fff"></circle><circle cx="631" cy="692" r="1.4" fill="#fff" opacity="0.25"></circle><circle cx="631" cy="692" r="0.6" fill="#fff"></circle><circle cx="645" cy="699" r="1.4" fill="#fff" opacity="0.25"></circle><circle cx="645" cy="699" r="0.6" fill="#fff"></circle><circle cx="655" cy="720" r="1.4" fill="#fff" opacity="0.25"></circle><circle cx="655" cy="720" r="0.6" fill="#fff"></circle><circle cx="765" cy="675" r="1.4" fill="#fff" opacity="0.25"></circle><circle cx="765" cy="675" r="0.6" fill="#fff"></circle><circle cx="765" cy="696" r="1.4" fill="#fff" opacity="0.25"></circle><circle cx="765" cy="696" r="0.6" fill="#fff"></circle><circle cx="840" cy="731" r="1.4" fill="#fff" opacity="0.25"></circle><circle cx="840" cy="731" r="0.6" fill="#fff"></circle><circle cx="783" cy="745" r="1.4" fill="#fff" opacity="0.25"></circle><circle cx="783" cy="745" r="0.6" fill="#fff"></circle><circle cx="768" cy="772" r="1.4" fill="#fff" opacity="0.25"></circle><circle cx="768" cy="772" r="0.6" fill="#fff"></circle><circle cx="687" cy="791" r="1.4" fill="#fff" opacity="0.25"></circle><circle cx="687" cy="791" r="0.6" fill="#fff"></circle><circle cx="656" cy="817" r="1.4" fill="#fff" opacity="0.25"></circle><circle cx="656" cy="817" r="0.6" fill="#fff"></circle><circle cx="780" cy="866" r="1.4" fill="#fff" opacity="0.25"></circle><circle cx="780" cy="866" r="0.6" fill="#fff"></circle><circle cx="835" cy="855" r="1.4" fill="#fff" opacity="0.25"></circle><circle cx="835" cy="855" r="0.6" fill="#fff"></circle><circle cx="612" cy="970" r="1.4" fill="#fff" opacity="0.25"></circle><circle cx="612" cy="970" r="0.6" fill="#fff"></circle><circle cx="756" cy="839" r="1.4" fill="#fff" opacity="0.25"></circle><circle cx="756" cy="839" r="0.6" fill="#fff"></circle><circle cx="446" cy="953" r="1.4" fill="#fff" opacity="0.25"></circle><circle cx="446" cy="953" r="0.6" fill="#fff"></circle><circle cx="365" cy="954" r="1.4" fill="#fff" opacity="0.25"></circle><circle cx="365" cy="954" r="0.6" fill="#fff"></circle><circle cx="265" cy="852" r="1.4" fill="#fff" opacity="0.25"></circle><circle cx="265" cy="852" r="0.6" fill="#fff"></circle><circle cx="180" cy="785" r="1.4" fill="#fff" opacity="0.25"></circle><circle cx="180" cy="785" r="0.6" fill="#fff"></circle><circle cx="877" cy="649" r="1.4" fill="#fff" opacity="0.25"></circle><circle cx="877" cy="649" r="0.6" fill="#fff"></circle><circle cx="925" cy="677" r="1.4" fill="#fff" opacity="0.25"></circle><circle cx="925" cy="677" r="0.6" fill="#fff"></circle><circle cx="730" cy="575" r="1.4" fill="#fff" opacity="0.25"></circle><circle cx="730" cy="575" r="0.6" fill="#fff"></circle><circle cx="692" cy="620" r="1.4" fill="#fff" opacity="0.25"></circle><circle cx="692" cy="620" r="0.6" fill="#fff"></circle><circle cx="716" cy="620" r="1.4" fill="#fff" opacity="0.25"></circle><circle cx="716" cy="620" r="0.6" fill="#fff"></circle><circle cx="879" cy="726" r="1.4" fill="#fff" opacity="0.25"></circle><circle cx="879" cy="726" r="0.6" fill="#fff"></circle><circle cx="915" cy="747" r="1.4" fill="#fff" opacity="0.25"></circle><circle cx="915" cy="747" r="0.6" fill="#fff"></circle><circle cx="900" cy="910" r="1.4" fill="#fff" opacity="0.25"></circle><circle cx="900" cy="910" r="0.6" fill="#fff"></circle><circle cx="840" cy="935" r="1.4" fill="#fff" opacity="0.25"></circle><circle cx="840" cy="935" r="0.6" fill="#fff"></circle><circle cx="296" cy="335" r="1.5" fill="#fff" opacity="0.25"></circle><circle cx="296" cy="335" r="0.7" fill="#fff"></circle><circle cx="300" cy="442" r="1.4" fill="#fff" opacity="0.25"></circle><circle cx="300" cy="442" r="0.6" fill="#fff"></circle><circle cx="502" cy="450" r="1.4" fill="#fff" opacity="0.25"></circle><circle cx="502" cy="450" r="0.6" fill="#fff"></circle><circle cx="185" cy="342" r="1.4" fill="#fff" opacity="0.25"></circle><circle cx="185" cy="342" r="0.6" fill="#fff"></circle><circle cx="395" cy="386" r="1.4" fill="#fff" opacity="0.25"></circle><circle cx="395" cy="386" r="0.6" fill="#fff"></circle><circle cx="397" cy="398" r="1.3" fill="#fff" opacity="0.25"></circle><circle cx="397" cy="398" r="0.6" fill="#fff"></circle><circle cx="316" cy="452" r="1.4" fill="#fff" opacity="0.25"></circle><circle cx="316" cy="452" r="0.6" fill="#fff"></circle><circle cx="213" cy="515" r="1.4" fill="#fff" opacity="0.25"></circle><circle cx="213" cy="515" r="0.6" fill="#fff"></circle><circle cx="407" cy="501" r="1.4" fill="#fff" opacity="0.25"></circle><circle cx="407" cy="501" r="0.6" fill="#fff"></circle><circle cx="350" cy="515" r="1.4" fill="#fff" opacity="0.25"></circle><circle cx="350" cy="515" r="0.6" fill="#fff"></circle><circle cx="223" cy="586" r="1.4" fill="#fff" opacity="0.25"></circle><circle cx="223" cy="586" r="0.6" fill="#fff"></circle><circle cx="289" cy="562" r="1.3" fill="#fff" opacity="0.25"></circle><circle cx="289" cy="562" r="0.6" fill="#fff"></circle><circle cx="373" cy="567" r="1.3" fill="#fff" opacity="0.25"></circle><circle cx="373" cy="567" r="0.6" fill="#fff"></circle><circle cx="369" cy="596" r="1.4" fill="#fff" opacity="0.25"></circle><circle cx="369" cy="596" r="0.6" fill="#fff"></circle><circle cx="477" cy="592" r="1.3" fill="#fff" opacity="0.25"></circle><circle cx="477" cy="592" r="0.6" fill="#fff"></circle><circle cx="681" cy="307" r="1.4" fill="#fff" opacity="0.25"></circle><circle cx="681" cy="307" r="0.6" fill="#fff"></circle><circle cx="753" cy="305" r="1.4" fill="#fff" opacity="0.25"></circle><circle cx="753" cy="305" r="0.6" fill="#fff"></circle><circle cx="850" cy="300" r="1.4" fill="#fff" opacity="0.25"></circle><circle cx="850" cy="300" r="0.6" fill="#fff"></circle><circle cx="657" cy="404" r="1.4" fill="#fff" opacity="0.25"></circle><circle cx="657" cy="404" r="0.6" fill="#fff"></circle><circle cx="750" cy="482" r="1.4" fill="#fff" opacity="0.25"></circle><circle cx="750" cy="482" r="0.6" fill="#fff"></circle><circle cx="849" cy="441" r="1.4" fill="#fff" opacity="0.25"></circle><circle cx="849" cy="441" r="0.6" fill="#fff"></circle><circle cx="801" cy="506" r="1.4" fill="#fff" opacity="0.25"></circle><circle cx="801" cy="506" r="0.6" fill="#fff"></circle><circle cx="935" cy="369" r="1.5" fill="#fff" opacity="0.25"></circle><circle cx="935" cy="369" r="0.7" fill="#fff"></circle><circle cx="988" cy="479" r="1.5" fill="#fff" opacity="0.25"></circle><circle cx="988" cy="479" r="0.7" fill="#fff"></circle><circle cx="941" cy="495" r="1.4" fill="#fff" opacity="0.25"></circle><circle cx="941" cy="495" r="0.6" fill="#fff"></circle><circle cx="960" cy="535" r="1.5" fill="#fff" opacity="0.25"></circle><circle cx="960" cy="535" r="0.7" fill="#fff"></circle><circle cx="909" cy="750" r="1.5" fill="#fff" opacity="0.25"></circle><circle cx="909" cy="750" r="0.7" fill="#fff"></circle><circle cx="1077" cy="648" r="1.5" fill="#fff" opacity="0.25"></circle><circle cx="1077" cy="648" r="0.7" fill="#fff"></circle><circle cx="960" cy="700" r="1.5" fill="#fff" opacity="0.25"></circle><circle cx="960" cy="700" r="0.7" fill="#fff"></circle></svg>
<div class="a" style="left:905px;top:136px;width:740px;height:399px;box-shadow:0 1px 6px 1px rgba(0,0,0,0.22)"></div>
<div class="a" style="left:905px;top:136px;width:740px;height:399px;background:#666;border:1px solid #5a5a5a"></div>
<div class="a" style="left:906px;top:137px;width:738px;height:24px;background:linear-gradient(90deg,#6e6e6e,#696969 40%,#666 100%)"></div>
<svg class="a" style="left:910px;top:141px" width="18" height="18" viewBox="0 0 18 18"><defs><linearGradient id="clg" x1="0" x2="1"><stop offset="0" stop-color="#111"></stop><stop offset="1" stop-color="#7b72b8"></stop></linearGradient></defs>
<polygon points="0,4.5 16,0.5 16.5,4 0.5,8" fill="url(#clg)"></polygon><path d="M3 7 L5 3.5 M7 6 L9 2.5 M11 5 L13 1.5 M14.5 4 L15.5 2" stroke="#ddd" stroke-width="1.2"></path>
<rect x="1" y="8.5" width="16" height="9" fill="url(#clg)"></rect><polygon points="6.5,10 6.5,16 12,13" fill="#e8e8e8"></polygon></svg>
<div class="a t" style="left: 1249px; top: 141px; font-size: 13px; font-weight: bold; color: rgb(192, 192, 192); transform-origin: 0px 0px; transform: scaleX(1.0045);">Blink</div>
<svg class="a" style="left:1607px;top:145px" width="10" height="9" viewBox="0 0 10 9"><rect x="0" y="0.5" width="9.5" height="1.6" fill="#dedede"></rect><polygon points="4.75,3 9.5,8 0,8" fill="#dedede"></polygon></svg>
<svg class="a" style="left:1628px;top:145px" width="10" height="10" viewBox="0 0 10 10"><path d="M1 1 L9 9 M9 1 L1 9" stroke="#e0e0e0" stroke-width="1.7"></path></svg>
<div class="a" style="left:907px;top:161px;width:736px;height:372px;background:#c4c4c4"></div>
<div class="a" style="left:911px;top:165px;width:202px;height:138px;background:#3c3c3c;border:1px solid #080808"></div>
<div class="a" style="left:912px;top:300px;width:200px;height:2px;background:#00d000"></div>
<svg class="a" style="left:0;top:0" width="1920" height="1080"><rect x="1014" y="276" width="1" height="1" fill="#fff" opacity="0.10"></rect><rect x="965" y="212" width="1" height="1" fill="#fff" opacity="0.06"></rect><rect x="1086" y="243" width="1" height="1" fill="#fff" opacity="0.08"></rect><rect x="935" y="249" width="1" height="1" fill="#fff" opacity="0.11"></rect><rect x="995" y="225" width="1" height="1" fill="#fff" opacity="0.13"></rect><rect x="1043" y="211" width="1" height="1" fill="#fff" opacity="0.15"></rect><rect x="1003" y="228" width="1" height="1" fill="#fff" opacity="0.15"></rect><rect x="982" y="224" width="1" height="1" fill="#fff" opacity="0.05"></rect><rect x="1040" y="213" width="1" height="1" fill="#fff" opacity="0.14"></rect><rect x="1056" y="205" width="1" height="1" fill="#fff" opacity="0.17"></rect><rect x="953" y="271" width="1" height="1" fill="#fff" opacity="0.11"></rect><rect x="1086" y="214" width="1" height="1" fill="#fff" opacity="0.06"></rect><rect x="1028" y="254" width="1" height="1" fill="#fff" opacity="0.18"></rect><rect x="958" y="254" width="1" height="1" fill="#fff" opacity="0.09"></rect><rect x="971" y="237" width="1" height="1" fill="#fff" opacity="0.10"></rect><rect x="964" y="218" width="1" height="1" fill="#fff" opacity="0.17"></rect><rect x="972" y="175" width="1" height="1" fill="#fff" opacity="0.16"></rect><rect x="1070" y="235" width="1" height="1" fill="#fff" opacity="0.07"></rect><rect x="1076" y="178" width="1" height="1" fill="#fff" opacity="0.17"></rect><rect x="953" y="218" width="1" height="1" fill="#fff" opacity="0.08"></rect><rect x="1036" y="204" width="1" height="1" fill="#fff" opacity="0.09"></rect><rect x="1082" y="261" width="1" height="1" fill="#fff" opacity="0.18"></rect><rect x="1071" y="266" width="1" height="1" fill="#fff" opacity="0.10"></rect><rect x="1029" y="258" width="1" height="1" fill="#fff" opacity="0.15"></rect><rect x="1018" y="232" width="1" height="1" fill="#fff" opacity="0.13"></rect><rect x="1071" y="251" width="1" height="1" fill="#fff" opacity="0.09"></rect><rect x="1092" y="181" width="1" height="1" fill="#fff" opacity="0.12"></rect><rect x="1044" y="238" width="1" height="1" fill="#fff" opacity="0.06"></rect><rect x="1002" y="234" width="1" height="1" fill="#fff" opacity="0.08"></rect><rect x="964" y="261" width="1" height="1" fill="#fff" opacity="0.07"></rect><rect x="1088" y="254" width="1" height="1" fill="#fff" opacity="0.09"></rect><rect x="1092" y="222" width="1" height="1" fill="#fff" opacity="0.10"></rect><rect x="963" y="247" width="1" height="1" fill="#fff" opacity="0.13"></rect><rect x="968" y="216" width="1" height="1" fill="#fff" opacity="0.13"></rect><rect x="1054" y="225" width="1" height="1" fill="#fff" opacity="0.11"></rect><rect x="1005" y="216" width="1" height="1" fill="#fff" opacity="0.09"></rect><rect x="1058" y="233" width="1" height="1" fill="#fff" opacity="0.12"></rect><rect x="1051" y="240" width="1" height="1" fill="#fff" opacity="0.13"></rect><rect x="1065" y="243" width="1" height="1" fill="#fff" opacity="0.13"></rect><rect x="1062" y="254" width="1" height="1" fill="#fff" opacity="0.11"></rect><rect x="994" y="213" width="1" height="1" fill="#fff" opacity="0.14"></rect><rect x="1009" y="232" width="1" height="1" fill="#fff" opacity="0.06"></rect><rect x="964" y="169" width="1" height="1" fill="#fff" opacity="0.08"></rect><rect x="958" y="249" width="1" height="1" fill="#fff" opacity="0.09"></rect><rect x="987" y="258" width="1" height="1" fill="#fff" opacity="0.10"></rect><rect x="982" y="224" width="1" height="1" fill="#fff" opacity="0.10"></rect><rect x="1011" y="231" width="1" height="1" fill="#fff" opacity="0.12"></rect><rect x="1007" y="212" width="1" height="1" fill="#fff" opacity="0.08"></rect><rect x="1020" y="217" width="1" height="1" fill="#fff" opacity="0.07"></rect><rect x="953" y="256" width="1" height="1" fill="#fff" opacity="0.06"></rect><rect x="994" y="262" width="1" height="1" fill="#fff" opacity="0.16"></rect><rect x="937" y="260" width="1" height="1" fill="#fff" opacity="0.07"></rect><rect x="980" y="275" width="1" height="1" fill="#fff" opacity="0.17"></rect><rect x="983" y="244" width="1" height="1" fill="#fff" opacity="0.07"></rect><rect x="984" y="234" width="1" height="1" fill="#fff" opacity="0.15"></rect><rect x="1023" y="222" width="1" height="1" fill="#fff" opacity="0.09"></rect><rect x="1030" y="198" width="1" height="1" fill="#fff" opacity="0.15"></rect><rect x="998" y="251" width="1" height="1" fill="#fff" opacity="0.09"></rect><rect x="1019" y="215" width="1" height="1" fill="#fff" opacity="0.10"></rect><rect x="974" y="254" width="1" height="1" fill="#fff" opacity="0.10"></rect><rect x="1030" y="230" width="1" height="1" fill="#fff" opacity="0.05"></rect><rect x="1087" y="216" width="1" height="1" fill="#fff" opacity="0.18"></rect><rect x="920" y="267" width="1" height="1" fill="#fff" opacity="0.17"></rect><rect x="1022" y="287" width="1" height="1" fill="#fff" opacity="0.16"></rect><rect x="985" y="207" width="1" height="1" fill="#fff" opacity="0.09"></rect><rect x="994" y="256" width="1" height="1" fill="#fff" opacity="0.06"></rect><rect x="982" y="225" width="1" height="1" fill="#fff" opacity="0.16"></rect><rect x="1093" y="256" width="1" height="1" fill="#fff" opacity="0.14"></rect><rect x="1086" y="209" width="1" height="1" fill="#fff" opacity="0.17"></rect><rect x="1004" y="236" width="1" height="1" fill="#fff" opacity="0.15"></rect><rect x="1026" y="260" width="1" height="1" fill="#fff" opacity="0.14"></rect><rect x="969" y="233" width="1" height="1" fill="#fff" opacity="0.17"></rect><rect x="982" y="220" width="1" height="1" fill="#fff" opacity="0.08"></rect><rect x="1039" y="212" width="1" height="1" fill="#fff" opacity="0.15"></rect><rect x="994" y="254" width="1" height="1" fill="#fff" opacity="0.12"></rect><rect x="1020" y="221" width="1" height="1" fill="#fff" opacity="0.15"></rect><rect x="1074" y="212" width="1" height="1" fill="#fff" opacity="0.16"></rect><rect x="1066" y="240" width="1" height="1" fill="#fff" opacity="0.16"></rect><rect x="1040" y="245" width="1" height="1" fill="#fff" opacity="0.08"></rect><rect x="969" y="233" width="1" height="1" fill="#fff" opacity="0.11"></rect><rect x="1010" y="236" width="1" height="1" fill="#fff" opacity="0.06"></rect><rect x="1024" y="249" width="1" height="1" fill="#fff" opacity="0.06"></rect><rect x="1088" y="229" width="1" height="1" fill="#fff" opacity="0.06"></rect><rect x="975" y="238" width="1" height="1" fill="#fff" opacity="0.09"></rect><rect x="976" y="273" width="1" height="1" fill="#fff" opacity="0.13"></rect><rect x="993" y="253" width="1" height="1" fill="#fff" opacity="0.09"></rect><rect x="1046" y="265" width="1" height="1" fill="#fff" opacity="0.14"></rect><rect x="998" y="246" width="1" height="1" fill="#fff" opacity="0.07"></rect><rect x="972" y="267" width="1" height="1" fill="#fff" opacity="0.15"></rect><rect x="958" y="275" width="1" height="1" fill="#fff" opacity="0.13"></rect><rect x="975" y="250" width="1" height="1" fill="#fff" opacity="0.11"></rect><rect x="998" y="208" width="1" height="1" fill="#fff" opacity="0.14"></rect><rect x="981" y="243" width="1" height="1" fill="#fff" opacity="0.12"></rect><rect x="1005" y="227" width="1" height="1" fill="#fff" opacity="0.11"></rect><rect x="936" y="266" width="1" height="1" fill="#fff" opacity="0.17"></rect><rect x="950" y="284" width="1" height="1" fill="#fff" opacity="0.15"></rect><rect x="1007" y="271" width="1" height="1" fill="#fff" opacity="0.07"></rect><rect x="1033" y="197" width="1" height="1" fill="#fff" opacity="0.17"></rect><rect x="1026" y="195" width="1" height="1" fill="#fff" opacity="0.15"></rect><rect x="993" y="233" width="1" height="1" fill="#fff" opacity="0.13"></rect><rect x="1032" y="239" width="1" height="1" fill="#fff" opacity="0.15"></rect><rect x="1027" y="242" width="1" height="1" fill="#fff" opacity="0.06"></rect><rect x="1028" y="225" width="1" height="1" fill="#fff" opacity="0.05"></rect><rect x="1021" y="225" width="1" height="1" fill="#fff" opacity="0.16"></rect><rect x="975" y="187" width="1" height="1" fill="#fff" opacity="0.17"></rect><rect x="947" y="212" width="1" height="1" fill="#fff" opacity="0.05"></rect><rect x="1015" y="202" width="1" height="1" fill="#fff" opacity="0.14"></rect><rect x="1062" y="269" width="1" height="1" fill="#fff" opacity="0.17"></rect><rect x="1043" y="248" width="1" height="1" fill="#fff" opacity="0.12"></rect><rect x="1024" y="218" width="1" height="1" fill="#fff" opacity="0.07"></rect><rect x="1010" y="280" width="1" height="1" fill="#fff" opacity="0.15"></rect><rect x="980" y="256" width="1" height="1" fill="#fff" opacity="0.10"></rect><rect x="985" y="263" width="1" height="1" fill="#fff" opacity="0.06"></rect><rect x="953" y="264" width="1" height="1" fill="#fff" opacity="0.07"></rect><rect x="986" y="191" width="1" height="1" fill="#fff" opacity="0.14"></rect><rect x="964" y="234" width="1" height="1" fill="#fff" opacity="0.13"></rect><rect x="1028" y="228" width="1" height="1" fill="#fff" opacity="0.06"></rect><rect x="1009" y="171" width="1" height="1" fill="#fff" opacity="0.12"></rect></svg>
<svg class="a" style="left:1121px;top:169px" width="20" height="20" viewBox="0 0 20 20"><defs><linearGradient id="hgb" x1="0" y1="1" x2="1" y2="0"><stop offset="0" stop-color="#1630e0"></stop><stop offset="1" stop-color="#8fb0f0"></stop></linearGradient></defs>
<rect x="0" y="0" width="20" height="20" fill="url(#hgb)"></rect><path d="M1 4 H19 M1 8 H19 M1 12 H19 M4 1 V19 M8 1 V19 M12 1 V19 M16 1 V19" stroke="#9aa0b0" stroke-width="0.9"></path>
<path d="M2 18 Q5 14 6 8 Q7 1.5 8 3 Q9 6 10 12 Q12 16 16 17 Q18 17 19 14 V18.5 H2 Z" fill="#e88a48"></path></svg>
<div class="a" style="left:1117px;top:197px;width:28px;height:28px;border:1px solid #707070;background:#e2e2e2"></div>
<svg class="a" style="left:1121px;top:201px" width="20" height="20" viewBox="0 0 20 20"><defs><linearGradient id="cvb" x1="0" y1="1" x2="1" y2="0"><stop offset="0" stop-color="#0c20d8"></stop><stop offset="1" stop-color="#7c98e8"></stop></linearGradient></defs>
<rect x="0" y="0" width="20" height="20" fill="url(#cvb)"></rect><rect x="0" y="0" width="20" height="3.2" fill="#3050e0"></rect><rect x="1" y="0.8" width="1.8" height="1.8" fill="#e88a48"></rect><rect x="14" y="0.8" width="1.8" height="1.8" fill="#e88a48"></rect><rect x="17" y="0.8" width="1.8" height="1.8" fill="#e88a48"></rect>
<path d="M3.5 5.5 V18 H17" fill="none" stroke="#e88a48" stroke-width="1"></path><path d="M3.5 18 Q7 8 17 6" fill="none" stroke="#e88a48" stroke-width="1.3"></path></svg>
<svg class="a" style="left:957px;top:310px" width="17" height="16" viewBox="0 0 17 16"><polygon points="0,8 7,0.5 7,4.5 16,4.5 16,11.5 7,11.5 7,15.5" fill="#3c3c3c"></polygon></svg>
<svg class="a" style="left:980px;top:311px" width="16" height="15" viewBox="0 0 16 15"><polygon points="0,0 15,7 0,14" fill="#3c3c3c"></polygon></svg>
<svg class="a" style="left:1001px;top:310px" width="17" height="16" viewBox="0 0 17 16"><polygon points="16,8 9,0.5 9,4.5 0,4.5 0,11.5 9,11.5 9,15.5" fill="#3c3c3c"></polygon></svg>
<div class="a" style="left:1024px;top:308px;width:88px;height:20px;border:1px solid #888;background:linear-gradient(#f2f2f2,#d8d8d8 70%,#cfcfcf)"></div>
<div class="a" style="left:1094px;top:310px;width:1px;height:16px;background:#a8a8a8"></div>
<svg class="a" style="left:1097px;top:316px" width="10" height="6" viewBox="0 0 10 6"><polygon points="0,0 10,0 5,5.5" fill="#111"></polygon></svg>
<div class="a t" style="left: 1030.5px; top: 312px; font-size: 12px; font-weight: normal; color: rgb(17, 17, 17); transform-origin: 0px 0px; transform: scaleX(1.003);">0.05 sec</div>
<svg class="a" style="left:1121px;top:312px" width="12" height="12" viewBox="0 0 12 12"><polygon points="0,5.5 6,0 6,11" fill="#1a5fc0"></polygon><polygon points="5,5.5 11,0 11,11" fill="#1a5fc0"></polygon></svg>
<div class="a" style="left:1149px;top:165px;width:490px;height:338px;border:2px solid #78a0e0;background:#adadad"></div>
<div class="a" style="left:1151px;top:167px;width:471px;height:17px;background:#dcdcdc;overflow:hidden"><svg class="a" style="left:6px;top:3px" width="13" height="13"><rect x="0.75" y="0.75" width="11.5" height="11.5" fill="none" stroke="#111" stroke-width="1.5"></rect><path d="M2.8 6.2 L5.3 9 L10 3.4" fill="none" stroke="#000" stroke-width="2.1"></path></svg><div class="a t" style="left: 23.5px; top: 2.1px; font-size: 12.2px; font-weight: normal; color: rgb(26, 26, 26); transform-origin: 0px 0px; transform: scaleX(1.0008);">Light_M 45_120.0s_Bin1_20251125-202420_0001</div></div><div class="a" style="left:1151px;top:184px;width:471px;height:17px;background:#cdd2dc;overflow:hidden"><svg class="a" style="left:6px;top:3px" width="13" height="13"><rect x="0.75" y="0.75" width="11.5" height="11.5" fill="none" stroke="#111" stroke-width="1.5"></rect><path d="M2.8 6.2 L5.3 9 L10 3.4" fill="none" stroke="#000" stroke-width="2.1"></path></svg><div class="a t" style="left: 23.5px; top: 2.1px; font-size: 12.2px; font-weight: normal; color: rgb(26, 26, 26); transform-origin: 0px 0px; transform: scaleX(1.0008);">Light_M 45_120.0s_Bin1_20251125-202621_0002</div></div><div class="a" style="left:1151px;top:201px;width:471px;height:17px;background:#dcdcdc;overflow:hidden"><svg class="a" style="left:6px;top:3px" width="13" height="13"><rect x="0.75" y="0.75" width="11.5" height="11.5" fill="none" stroke="#111" stroke-width="1.5"></rect><path d="M2.8 6.2 L5.3 9 L10 3.4" fill="none" stroke="#000" stroke-width="2.1"></path></svg><div class="a t" style="left: 23.5px; top: 2.1px; font-size: 12.2px; font-weight: normal; color: rgb(26, 26, 26); transform-origin: 0px 0px; transform: scaleX(1.0008);">Light_M 45_120.0s_Bin1_20251125-202822_0003</div></div><div class="a" style="left:1151px;top:218px;width:471px;height:17px;background:#cdd2dc;overflow:hidden"><svg class="a" style="left:6px;top:3px" width="13" height="13"><rect x="0.75" y="0.75" width="11.5" height="11.5" fill="none" stroke="#111" stroke-width="1.5"></rect><path d="M2.8 6.2 L5.3 9 L10 3.4" fill="none" stroke="#000" stroke-width="2.1"></path></svg><div class="a t" style="left: 23.5px; top: 2.1px; font-size: 12.2px; font-weight: normal; color: rgb(26, 26, 26); transform-origin: 0px 0px; transform: scaleX(1.0008);">Light_M 45_120.0s_Bin1_20251125-203023_0004</div></div><div class="a" style="left:1151px;top:235px;width:471px;height:17px;background:#dcdcdc;overflow:hidden"><svg class="a" style="left:6px;top:3px" width="13" height="13"><rect x="0.75" y="0.75" width="11.5" height="11.5" fill="none" stroke="#111" stroke-width="1.5"></rect><path d="M2.8 6.2 L5.3 9 L10 3.4" fill="none" stroke="#000" stroke-width="2.1"></path></svg><div class="a t" style="left: 23.5px; top: 2.1px; font-size: 12.2px; font-weight: normal; color: rgb(26, 26, 26); transform-origin: 0px 0px; transform: scaleX(1.0008);">Light_M 45_120.0s_Bin1_20251125-203224_0005</div></div><div class="a" style="left:1151px;top:252px;width:471px;height:17px;background:#cdd2dc;overflow:hidden"><svg class="a" style="left:6px;top:3px" width="13" height="13"><rect x="0.75" y="0.75" width="11.5" height="11.5" fill="none" stroke="#111" stroke-width="1.5"></rect><path d="M2.8 6.2 L5.3 9 L10 3.4" fill="none" stroke="#000" stroke-width="2.1"></path></svg><div class="a t" style="left: 23.5px; top: 2.1px; font-size: 12.2px; font-weight: normal; color: rgb(26, 26, 26); transform-origin: 0px 0px; transform: scaleX(1.0008);">Light_M 45_120.0s_Bin1_20251125-203424_0006</div></div><div class="a" style="left:1151px;top:269px;width:471px;height:17px;background:#dcdcdc;overflow:hidden"><svg class="a" style="left:6px;top:3px" width="13" height="13"><rect x="0.75" y="0.75" width="11.5" height="11.5" fill="none" stroke="#111" stroke-width="1.5"></rect><path d="M2.8 6.2 L5.3 9 L10 3.4" fill="none" stroke="#000" stroke-width="2.1"></path></svg><div class="a t" style="left: 23.5px; top: 2.1px; font-size: 12.2px; font-weight: normal; color: rgb(26, 26, 26); transform-origin: 0px 0px; transform: scaleX(1.0008);">Light_M 45_120.0s_Bin1_20251125-203624_0007</div></div><div class="a" style="left:1151px;top:286px;width:471px;height:17px;background:#cdd2dc;overflow:hidden"><svg class="a" style="left:6px;top:3px" width="13" height="13"><rect x="0.75" y="0.75" width="11.5" height="11.5" fill="none" stroke="#111" stroke-width="1.5"></rect><path d="M2.8 6.2 L5.3 9 L10 3.4" fill="none" stroke="#000" stroke-width="2.1"></path></svg><div class="a t" style="left: 23.5px; top: 2.1px; font-size: 12.2px; font-weight: normal; color: rgb(26, 26, 26); transform-origin: 0px 0px; transform: scaleX(1.0008);">Light_M 45_120.0s_Bin1_20251125-203825_0008</div></div><div class="a" style="left:1151px;top:303px;width:471px;height:17px;background:#dcdcdc;overflow:hidden"><svg class="a" style="left:6px;top:3px" width="13" height="13"><rect x="0.75" y="0.75" width="11.5" height="11.5" fill="none" stroke="#111" stroke-width="1.5"></rect><path d="M2.8 6.2 L5.3 9 L10 3.4" fill="none" stroke="#000" stroke-width="2.1"></path></svg><div class="a t" style="left: 23.5px; top: 2.1px; font-size: 12.2px; font-weight: normal; color: rgb(26, 26, 26); transform-origin: 0px 0px; transform: scaleX(1.0008);">Light_M 45_120.0s_Bin1_20251125-204026_0009</div></div><div class="a" style="left:1151px;top:320px;width:471px;height:17px;background:#cdd2dc;overflow:hidden"><svg class="a" style="left:6px;top:3px" width="13" height="13"><rect x="0.75" y="0.75" width="11.5" height="11.5" fill="none" stroke="#111" stroke-width="1.5"></rect><path d="M2.8 6.2 L5.3 9 L10 3.4" fill="none" stroke="#000" stroke-width="2.1"></path></svg><div class="a t" style="left: 23.5px; top: 2.1px; font-size: 12.2px; font-weight: normal; color: rgb(26, 26, 26); transform-origin: 0px 0px; transform: scaleX(1.0008);">Light_M 45_120.0s_Bin1_20251125-204227_0010</div></div><div class="a" style="left:1151px;top:337px;width:471px;height:17px;background:#dcdcdc;overflow:hidden"><svg class="a" style="left:6px;top:3px" width="13" height="13"><rect x="0.75" y="0.75" width="11.5" height="11.5" fill="none" stroke="#111" stroke-width="1.5"></rect><path d="M2.8 6.2 L5.3 9 L10 3.4" fill="none" stroke="#000" stroke-width="2.1"></path></svg><div class="a t" style="left: 23.5px; top: 2.1px; font-size: 12.2px; font-weight: normal; color: rgb(26, 26, 26); transform-origin: 0px 0px; transform: scaleX(1.0041);">Light_M 45_120.0s_Bin1_20251125-204427_0011</div></div><div class="a" style="left:1151px;top:354px;width:471px;height:17px;background:#cdd2dc;overflow:hidden"><svg class="a" style="left:6px;top:3px" width="13" height="13"><rect x="0.75" y="0.75" width="11.5" height="11.5" fill="none" stroke="#111" stroke-width="1.5"></rect><path d="M2.8 6.2 L5.3 9 L10 3.4" fill="none" stroke="#000" stroke-width="2.1"></path></svg><div class="a t" style="left: 23.5px; top: 2.1px; font-size: 12.2px; font-weight: normal; color: rgb(26, 26, 26); transform-origin: 0px 0px; transform: scaleX(1.0008);">Light_M 45_120.0s_Bin1_20251125-204628_0012</div></div><div class="a" style="left:1151px;top:371px;width:471px;height:17px;background:linear-gradient(#eab37a,#e39c5b 55%,#d98e4c);overflow:hidden"><svg class="a" style="left:6px;top:3px" width="13" height="13"><rect x="0.75" y="0.75" width="11.5" height="11.5" fill="none" stroke="#111" stroke-width="1.5"></rect><path d="M2.8 6.2 L5.3 9 L10 3.4" fill="none" stroke="#000" stroke-width="2.1"></path></svg><div class="a t" style="left: 23.5px; top: 2.1px; font-size: 12.2px; font-weight: normal; color: rgb(26, 26, 26); transform-origin: 0px 0px; transform: scaleX(1.0008);">Light_M 45_120.0s_Bin1_20251125-204829_0013</div></div><div class="a" style="left:1151px;top:388px;width:471px;height:17px;background:#cdd2dc;overflow:hidden"><svg class="a" style="left:6px;top:3px" width="13" height="13"><rect x="0.75" y="0.75" width="11.5" height="11.5" fill="none" stroke="#111" stroke-width="1.5"></rect><path d="M2.8 6.2 L5.3 9 L10 3.4" fill="none" stroke="#000" stroke-width="2.1"></path></svg><div class="a t" style="left: 23.5px; top: 2.1px; font-size: 12.2px; font-weight: normal; color: rgb(26, 26, 26); transform-origin: 0px 0px; transform: scaleX(1.0008);">Light_M 45_120.0s_Bin1_20251125-205030_0014</div></div><div class="a" style="left:1151px;top:405px;width:471px;height:17px;background:#dcdcdc;overflow:hidden"><svg class="a" style="left:6px;top:3px" width="13" height="13"><rect x="0.75" y="0.75" width="11.5" height="11.5" fill="none" stroke="#111" stroke-width="1.5"></rect><path d="M2.8 6.2 L5.3 9 L10 3.4" fill="none" stroke="#000" stroke-width="2.1"></path></svg><div class="a t" style="left: 23.5px; top: 2.1px; font-size: 12.2px; font-weight: normal; color: rgb(26, 26, 26); transform-origin: 0px 0px; transform: scaleX(1.0008);">Light_M 45_120.0s_Bin1_20251125-205231_0015</div></div><div class="a" style="left:1151px;top:422px;width:471px;height:17px;background:#cdd2dc;overflow:hidden"><svg class="a" style="left:6px;top:3px" width="13" height="13"><rect x="0.75" y="0.75" width="11.5" height="11.5" fill="none" stroke="#111" stroke-width="1.5"></rect><path d="M2.8 6.2 L5.3 9 L10 3.4" fill="none" stroke="#000" stroke-width="2.1"></path></svg><div class="a t" style="left: 23.5px; top: 2.1px; font-size: 12.2px; font-weight: normal; color: rgb(26, 26, 26); transform-origin: 0px 0px; transform: scaleX(1.0008);">Light_M 45_120.0s_Bin1_20251125-205431_0016</div></div><div class="a" style="left:1151px;top:439px;width:471px;height:17px;background:#dcdcdc;overflow:hidden"><svg class="a" style="left:6px;top:3px" width="13" height="13"><rect x="0.75" y="0.75" width="11.5" height="11.5" fill="none" stroke="#111" stroke-width="1.5"></rect><path d="M2.8 6.2 L5.3 9 L10 3.4" fill="none" stroke="#000" stroke-width="2.1"></path></svg><div class="a t" style="left: 23.5px; top: 2.1px; font-size: 12.2px; font-weight: normal; color: rgb(26, 26, 26); transform-origin: 0px 0px; transform: scaleX(1.0008);">Light_M 45_120.0s_Bin1_20251125-205632_0017</div></div><div class="a" style="left:1151px;top:456px;width:471px;height:17px;background:#cdd2dc;overflow:hidden"><svg class="a" style="left:6px;top:3px" width="13" height="13"><rect x="0.75" y="0.75" width="11.5" height="11.5" fill="none" stroke="#111" stroke-width="1.5"></rect><path d="M2.8 6.2 L5.3 9 L10 3.4" fill="none" stroke="#000" stroke-width="2.1"></path></svg><div class="a t" style="left: 23.5px; top: 2.1px; font-size: 12.2px; font-weight: normal; color: rgb(26, 26, 26); transform-origin: 0px 0px; transform: scaleX(1.0008);">Light_M 45_120.0s_Bin1_20251125-205833_0018</div></div><div class="a" style="left:1151px;top:473px;width:471px;height:13px;background:#dcdcdc;overflow:hidden"><svg class="a" style="left:6px;top:3px" width="13" height="13"><rect x="0.75" y="0.75" width="11.5" height="11.5" fill="none" stroke="#111" stroke-width="1.5"></rect><path d="M2.8 6.2 L5.3 9 L10 3.4" fill="none" stroke="#000" stroke-width="2.1"></path></svg><div class="a t" style="left: 23.5px; top: 2.1px; font-size: 12.2px; font-weight: normal; color: rgb(26, 26, 26); transform-origin: 0px 0px; transform: scaleX(1.0008);">Light_M 45_120.0s_Bin1_20251125-210034_0019</div></div>
<div class="a" style="left:1622px;top:167px;width:15px;height:319px;background:#adadad"></div>
<div class="a" style="left:1623px;top:167px;width:13px;height:20px;background:#c4c4c4;border:2px solid #8a8a8a"></div>
<svg class="a" style="left:1624px;top:458px" width="11" height="6" viewBox="0 0 11 6"><polygon points="5,0 10,5.5 0,5.5" fill="#111"></polygon></svg>
<svg class="a" style="left:1624px;top:475px" width="11" height="6" viewBox="0 0 11 6"><polygon points="0,0 10,0 5,5.5" fill="#111"></polygon></svg>
<div class="a" style="left:1151px;top:486px;width:486px;height:15px;background:#adadad"></div>
<div class="a" style="left:1151px;top:487px;width:436px;height:13px;background:#c9c9c9;border:2px solid #8e8e8e"></div>
<svg class="a" style="left:1594px;top:489px" width="6" height="10" viewBox="0 0 6 10"><polygon points="5.5,0 5.5,9.5 0,4.75" fill="#111"></polygon></svg>
<svg class="a" style="left:1611px;top:489px" width="6" height="10" viewBox="0 0 6 10"><polygon points="0,0 0,9.5 5.5,4.75" fill="#111"></polygon></svg>
<svg class="a" style="left:1152px;top:511px" width="16" height="15" viewBox="0 0 16 15"><path d="M0.5 14 V2 Q0.5 1 1.5 1 H6 L7.5 2.5 H14 V5" fill="#666"></path><polygon points="1,14.5 3,5.5 16,5.5 14.5,14.5" fill="#f0b040"></polygon></svg>
<svg class="a" style="left:1178px;top:511px" width="16" height="15" viewBox="0 0 16 15"><rect x="0.5" y="1" width="15" height="13.5" fill="#eee" stroke="#555"></rect><rect x="0" y="0" width="16" height="2.5" fill="#2a62c0"></rect><circle cx="11.5" cy="11" r="4" fill="#d42a18"></circle><path d="M9.8 9.3 L13.2 12.7 M13.2 9.3 L9.8 12.7" stroke="#fff" stroke-width="1.2"></path></svg>
<svg class="a" style="left:1204px;top:511px" width="16" height="15" viewBox="0 0 16 15"><rect x="4.5" y="0.5" width="9" height="8" fill="#eee" stroke="#555"></rect><rect x="4" y="0" width="10" height="2" fill="#2a62c0"></rect><rect x="0.5" y="5.5" width="8" height="8" fill="#eee" stroke="#555"></rect><rect x="0" y="5" width="9" height="2" fill="#2a62c0"></rect><path d="M9 9 L15 15 M15 9 L9 15" stroke="#d03020" stroke-width="1.8"></path></svg>
<svg class="a" style="left:1230px;top:511px" width="16" height="15" viewBox="0 0 16 15"><rect x="0.5" y="0.5" width="15" height="14.5" rx="1" fill="#8a2ab0"></rect><rect x="3" y="2" width="10" height="5.5" fill="#eee"></rect><path d="M4.5 3.8 H11.5 M4.5 5.8 H11.5" stroke="#999" stroke-width="0.8"></path><rect x="4.5" y="10" width="7" height="5" fill="#eee"></rect><rect x="6" y="11" width="2" height="4" fill="#8a2ab0"></rect></svg>
<svg class="a" style="left:1256px;top:511px" width="16" height="15" viewBox="0 0 16 15"><polygon points="7,0.5 13,0.5 16,3.5 16,14 7,14" fill="#eee" stroke="#666" stroke-width="0.8"></polygon><path d="M9 4 H11 M9 6.5 H11 M9 9 H11" stroke="#2a62c0" stroke-width="1"></path><polygon points="0,8 3,7 5,8 9,8 9,14.5 0,14.5" fill="#f0b040"></polygon><path d="M15 10.5 H9 M11.5 7.5 L8.5 10.5 L11.5 13.5" fill="none" stroke="#2a62c0" stroke-width="2"></path></svg>
<svg class="a" style="left:1282px;top:511px" width="16" height="15" viewBox="0 0 16 15"><path d="M3 0 L9 10 M13 0 L7 10" stroke="#555" stroke-width="1.6"></path><circle cx="4" cy="12" r="2.5" fill="none" stroke="#1a5fc0" stroke-width="1.8"></circle><circle cx="12" cy="12" r="2.5" fill="none" stroke="#1a5fc0" stroke-width="1.8"></circle></svg>
<svg class="a" style="left:1308px;top:511px" width="16" height="15" viewBox="0 0 16 15"><rect x="1" y="5" width="3.5" height="10" fill="#1a56b0"></rect><rect x="6" y="8.5" width="3.5" height="6.5" fill="#1a56b0"></rect><rect x="11" y="0.5" width="3.5" height="14.5" fill="#1a56b0"></rect></svg>
<svg class="a" style="left:1334px;top:511px" width="16" height="15" viewBox="0 0 16 15"><polygon points="0,4 15,0 16,3.5 1,7.5" fill="#444"></polygon><path d="M3 6 L5 2.5 M7 5 L9 1.5 M11 4 L13 0.8" stroke="#eee" stroke-width="1.1"></path><rect x="0.5" y="7.5" width="15.5" height="7.5" fill="#444"></rect></svg>
<div class="a" style="left:907px;top:274px;width:224px;height:258px;background:rgba(0,0,0,0.025)"></div>
<div class="a pl1" style="left:905px;top:249px;width:228px;height:25px"></div>
<div class="a pl2" style="left:1131px;top:274px;width:2px;height:259px"></div>
<svg class="a pl3" style="left:0;top:0" width="1920" height="1080"><circle cx="935" cy="369" r="0.7" fill="rgb(50,50,50)"></circle><circle cx="988" cy="479" r="0.7" fill="rgb(50,50,50)"></circle><circle cx="941" cy="495" r="0.6" fill="rgb(50,50,50)"></circle><rect x="1008" y="418" width="1" height="1" fill="rgb(22,22,22)"></rect><rect x="1113" y="394" width="1" height="1" fill="rgb(22,22,22)"></rect><rect x="1021" y="425" width="1" height="1" fill="rgb(22,22,22)"></rect><rect x="949" y="406" width="1" height="1" fill="rgb(22,22,22)"></rect><rect x="1048" y="478" width="1" height="1" fill="rgb(22,22,22)"></rect><rect x="929" y="353" width="1" height="1" fill="rgb(22,22,22)"></rect><rect x="928" y="482" width="1" height="1" fill="rgb(22,22,22)"></rect><rect x="1062" y="286" width="1" height="1" fill="rgb(22,22,22)"></rect><rect x="1126" y="522" width="1" height="1" fill="rgb(22,22,22)"></rect><rect x="1053" y="433" width="1" height="1" fill="rgb(22,22,22)"></rect><rect x="943" y="279" width="1" height="1" fill="rgb(22,22,22)"></rect><rect x="1025" y="290" width="1" height="1" fill="rgb(22,22,22)"></rect><rect x="950" y="337" width="1" height="1" fill="rgb(22,22,22)"></rect><rect x="915" y="394" width="1" height="1" fill="rgb(22,22,22)"></rect><rect x="1006" y="491" width="1" height="1" fill="rgb(22,22,22)"></rect><rect x="1023" y="439" width="1" height="1" fill="rgb(22,22,22)"></rect><rect x="1019" y="445" width="1" height="1" fill="rgb(22,22,22)"></rect><rect x="1010" y="346" width="1" height="1" fill="rgb(22,22,22)"></rect><rect x="1129" y="530" width="1" height="1" fill="rgb(22,22,22)"></rect><rect x="1095" y="456" width="1" height="1" fill="rgb(22,22,22)"></rect><rect x="978" y="334" width="1" height="1" fill="rgb(22,22,22)"></rect><rect x="972" y="293" width="1" height="1" fill="rgb(22,22,22)"></rect><rect x="1078" y="378" width="1" height="1" fill="rgb(22,22,22)"></rect><rect x="1096" y="374" width="1" height="1" fill="rgb(22,22,22)"></rect><rect x="1121" y="492" width="1" height="1" fill="rgb(22,22,22)"></rect><rect x="908" y="329" width="1" height="1" fill="rgb(22,22,22)"></rect><rect x="1110" y="395" width="1" height="1" fill="rgb(22,22,22)"></rect><rect x="1126" y="377" width="1" height="1" fill="rgb(22,22,22)"></rect><rect x="924" y="436" width="1" height="1" fill="rgb(22,22,22)"></rect><rect x="1081" y="344" width="1" height="1" fill="rgb(22,22,22)"></rect><rect x="927" y="360" width="1" height="1" fill="rgb(22,22,22)"></rect><rect x="1122" y="469" width="1" height="1" fill="rgb(22,22,22)"></rect><rect x="934" y="338" width="1" height="1" fill="rgb(22,22,22)"></rect><rect x="930" y="290" width="1" height="1" fill="rgb(22,22,22)"></rect><rect x="1085" y="320" width="1" height="1" fill="rgb(22,22,22)"></rect><rect x="1032" y="390" width="1" height="1" fill="rgb(22,22,22)"></rect><rect x="950" y="462" width="1" height="1" fill="rgb(22,22,22)"></rect><rect x="937" y="440" width="1" height="1" fill="rgb(22,22,22)"></rect><rect x="934" y="383" width="1" height="1" fill="rgb(22,22,22)"></rect><rect x="955" y="344" width="1" height="1" fill="rgb(22,22,22)"></rect><rect x="1124" y="481" width="1" height="1" fill="rgb(22,22,22)"></rect><rect x="976" y="502" width="1" height="1" fill="rgb(22,22,22)"></rect><rect x="955" y="376" width="1" height="1" fill="rgb(22,22,22)"></rect><rect x="1098" y="439" width="1" height="1" fill="rgb(22,22,22)"></rect><rect x="930" y="528" width="1" height="1" fill="rgb(22,22,22)"></rect><rect x="955" y="341" width="1" height="1" fill="rgb(22,22,22)"></rect><rect x="1080" y="359" width="1" height="1" fill="rgb(22,22,22)"></rect><rect x="974" y="294" width="1" height="1" fill="rgb(22,22,22)"></rect><rect x="928" y="424" width="1" height="1" fill="rgb(22,22,22)"></rect><rect x="962" y="429" width="1" height="1" fill="rgb(22,22,22)"></rect><rect x="991" y="391" width="1" height="1" fill="rgb(22,22,22)"></rect><rect x="1121" y="399" width="1" height="1" fill="rgb(22,22,22)"></rect><rect x="1036" y="497" width="1" height="1" fill="rgb(22,22,22)"></rect><rect x="949" y="314" width="1" height="1" fill="rgb(22,22,22)"></rect><rect x="1110" y="484" width="1" height="1" fill="rgb(22,22,22)"></rect><rect x="963" y="324" width="1" height="1" fill="rgb(22,22,22)"></rect><rect x="1072" y="516" width="1" height="1" fill="rgb(22,22,22)"></rect><rect x="952" y="518" width="1" height="1" fill="rgb(22,22,22)"></rect><rect x="1104" y="430" width="1" height="1" fill="rgb(22,22,22)"></rect><rect x="1002" y="302" width="1" height="1" fill="rgb(22,22,22)"></rect></svg>
<svg class="a" style="left:1053px;top:261px" width="10" height="4" viewBox="0 0 10 4"><rect x="0" y="0" width="9.5" height="3" fill="#6e6e70"></rect></svg>
<svg class="a" style="left:1074px;top:259px" width="10" height="8" viewBox="0 0 10 8"><rect x="0" y="0" width="9.5" height="1.8" fill="#6e6e70"></rect><polygon points="4.75,2.5 9.5,7 0,7" fill="#6e6e70"></polygon></svg>
<svg class="a" style="left:1095px;top:258px" width="10" height="10" viewBox="0 0 10 10"><path d="M4.75 0 V9.5 M0 4.75 H9.5" stroke="#6e6e70" stroke-width="2.6"></path></svg>
<svg class="a" style="left:1116px;top:258px" width="10" height="10" viewBox="0 0 10 10"><path d="M1 1 L9 9 M9 1 L1 9" stroke="#ececf0" stroke-width="1.8"></path></svg>
<div class="a" style="left:0;top:1014px;width:1920px;height:1px;background:#2a2a2a"></div>
<div class="a" style="left:0;top:1015px;width:1920px;height:33px;background:#efefef"></div>
<div class="a" style="left:0;top:1015px;width:1920px;height:1px;background:#fbfbfb"></div>
<svg class="a" style="left:6px;top:1020px" width="7" height="22"><rect x="0.5" y="0.5" width="1.7" height="1.7" fill="#3a3a3a"></rect><rect x="4.5" y="0.5" width="1.7" height="1.7" fill="#3a3a3a"></rect><rect x="2.5" y="2.5" width="1.7" height="1.7" fill="#3a3a3a"></rect><rect x="0.5" y="4.5" width="1.7" height="1.7" fill="#3a3a3a"></rect><rect x="4.5" y="4.5" width="1.7" height="1.7" fill="#3a3a3a"></rect><rect x="2.5" y="6.5" width="1.7" height="1.7" fill="#3a3a3a"></rect><rect x="0.5" y="8.5" width="1.7" height="1.7" fill="#3a3a3a"></rect><rect x="4.5" y="8.5" width="1.7" height="1.7" fill="#3a3a3a"></rect><rect x="2.5" y="10.5" width="1.7" height="1.7" fill="#3a3a3a"></rect><rect x="0.5" y="12.5" width="1.7" height="1.7" fill="#3a3a3a"></rect><rect x="4.5" y="12.5" width="1.7" height="1.7" fill="#3a3a3a"></rect><rect x="2.5" y="14.5" width="1.7" height="1.7" fill="#3a3a3a"></rect><rect x="0.5" y="16.5" width="1.7" height="1.7" fill="#3a3a3a"></rect><rect x="4.5" y="16.5" width="1.7" height="1.7" fill="#3a3a3a"></rect><rect x="2.5" y="18.5" width="1.7" height="1.7" fill="#3a3a3a"></rect><rect x="0.5" y="20.5" width="1.7" height="1.7" fill="#3a3a3a"></rect><rect x="4.5" y="20.5" width="1.7" height="1.7" fill="#3a3a3a"></rect></svg>
<svg class="a" style="left:331px;top:1020px" width="7" height="22"><rect x="0.5" y="0.5" width="1.7" height="1.7" fill="#3a3a3a"></rect><rect x="4.5" y="0.5" width="1.7" height="1.7" fill="#3a3a3a"></rect><rect x="2.5" y="2.5" width="1.7" height="1.7" fill="#3a3a3a"></rect><rect x="0.5" y="4.5" width="1.7" height="1.7" fill="#3a3a3a"></rect><rect x="4.5" y="4.5" width="1.7" height="1.7" fill="#3a3a3a"></rect><rect x="2.5" y="6.5" width="1.7" height="1.7" fill="#3a3a3a"></rect><rect x="0.5" y="8.5" width="1.7" height="1.7" fill="#3a3a3a"></rect><rect x="4.5" y="8.5" width="1.7" height="1.7" fill="#3a3a3a"></rect><rect x="2.5" y="10.5" width="1.7" height="1.7" fill="#3a3a3a"></rect><rect x="0.5" y="12.5" width="1.7" height="1.7" fill="#3a3a3a"></rect><rect x="4.5" y="12.5" width="1.7" height="1.7" fill="#3a3a3a"></rect><rect x="2.5" y="14.5" width="1.7" height="1.7" fill="#3a3a3a"></rect><rect x="0.5" y="16.5" width="1.7" height="1.7" fill="#3a3a3a"></rect><rect x="4.5" y="16.5" width="1.7" height="1.7" fill="#3a3a3a"></rect><rect x="2.5" y="18.5" width="1.7" height="1.7" fill="#3a3a3a"></rect><rect x="0.5" y="20.5" width="1.7" height="1.7" fill="#3a3a3a"></rect><rect x="4.5" y="20.5" width="1.7" height="1.7" fill="#3a3a3a"></rect></svg>
<svg class="a" style="left:441px;top:1020px" width="7" height="22"><rect x="0.5" y="0.5" width="1.7" height="1.7" fill="#3a3a3a"></rect><rect x="4.5" y="0.5" width="1.7" height="1.7" fill="#3a3a3a"></rect><rect x="2.5" y="2.5" width="1.7" height="1.7" fill="#3a3a3a"></rect><rect x="0.5" y="4.5" width="1.7" height="1.7" fill="#3a3a3a"></rect><rect x="4.5" y="4.5" width="1.7" height="1.7" fill="#3a3a3a"></rect><rect x="2.5" y="6.5" width="1.7" height="1.7" fill="#3a3a3a"></rect><rect x="0.5" y="8.5" width="1.7" height="1.7" fill="#3a3a3a"></rect><rect x="4.5" y="8.5" width="1.7" height="1.7" fill="#3a3a3a"></rect><rect x="2.5" y="10.5" width="1.7" height="1.7" fill="#3a3a3a"></rect><rect x="0.5" y="12.5" width="1.7" height="1.7" fill="#3a3a3a"></rect><rect x="4.5" y="12.5" width="1.7" height="1.7" fill="#3a3a3a"></rect><rect x="2.5" y="14.5" width="1.7" height="1.7" fill="#3a3a3a"></rect><rect x="0.5" y="16.5" width="1.7" height="1.7" fill="#3a3a3a"></rect><rect x="4.5" y="16.5" width="1.7" height="1.7" fill="#3a3a3a"></rect><rect x="2.5" y="18.5" width="1.7" height="1.7" fill="#3a3a3a"></rect><rect x="0.5" y="20.5" width="1.7" height="1.7" fill="#3a3a3a"></rect><rect x="4.5" y="20.5" width="1.7" height="1.7" fill="#3a3a3a"></rect></svg>
<svg class="a" style="left:635px;top:1020px" width="7" height="22"><rect x="0.5" y="0.5" width="1.7" height="1.7" fill="#3a3a3a"></rect><rect x="4.5" y="0.5" width="1.7" height="1.7" fill="#3a3a3a"></rect><rect x="2.5" y="2.5" width="1.7" height="1.7" fill="#3a3a3a"></rect><rect x="0.5" y="4.5" width="1.7" height="1.7" fill="#3a3a3a"></rect><rect x="4.5" y="4.5" width="1.7" height="1.7" fill="#3a3a3a"></rect><rect x="2.5" y="6.5" width="1.7" height="1.7" fill="#3a3a3a"></rect><rect x="0.5" y="8.5" width="1.7" height="1.7" fill="#3a3a3a"></rect><rect x="4.5" y="8.5" width="1.7" height="1.7" fill="#3a3a3a"></rect><rect x="2.5" y="10.5" width="1.7" height="1.7" fill="#3a3a3a"></rect><rect x="0.5" y="12.5" width="1.7" height="1.7" fill="#3a3a3a"></rect><rect x="4.5" y="12.5" width="1.7" height="1.7" fill="#3a3a3a"></rect><rect x="2.5" y="14.5" width="1.7" height="1.7" fill="#3a3a3a"></rect><rect x="0.5" y="16.5" width="1.7" height="1.7" fill="#3a3a3a"></rect><rect x="4.5" y="16.5" width="1.7" height="1.7" fill="#3a3a3a"></rect><rect x="2.5" y="18.5" width="1.7" height="1.7" fill="#3a3a3a"></rect><rect x="0.5" y="20.5" width="1.7" height="1.7" fill="#3a3a3a"></rect><rect x="4.5" y="20.5" width="1.7" height="1.7" fill="#3a3a3a"></rect></svg>
<svg class="a" style="left:1066px;top:1020px" width="7" height="22"><rect x="0.5" y="0.5" width="1.7" height="1.7" fill="#3a3a3a"></rect><rect x="4.5" y="0.5" width="1.7" height="1.7" fill="#3a3a3a"></rect><rect x="2.5" y="2.5" width="1.7" height="1.7" fill="#3a3a3a"></rect><rect x="0.5" y="4.5" width="1.7" height="1.7" fill="#3a3a3a"></rect><rect x="4.5" y="4.5" width="1.7" height="1.7" fill="#3a3a3a"></rect><rect x="2.5" y="6.5" width="1.7" height="1.7" fill="#3a3a3a"></rect><rect x="0.5" y="8.5" width="1.7" height="1.7" fill="#3a3a3a"></rect><rect x="4.5" y="8.5" width="1.7" height="1.7" fill="#3a3a3a"></rect><rect x="2.5" y="10.5" width="1.7" height="1.7" fill="#3a3a3a"></rect><rect x="0.5" y="12.5" width="1.7" height="1.7" fill="#3a3a3a"></rect><rect x="4.5" y="12.5" width="1.7" height="1.7" fill="#3a3a3a"></rect><rect x="2.5" y="14.5" width="1.7" height="1.7" fill="#3a3a3a"></rect><rect x="0.5" y="16.5" width="1.7" height="1.7" fill="#3a3a3a"></rect><rect x="4.5" y="16.5" width="1.7" height="1.7" fill="#3a3a3a"></rect><rect x="2.5" y="18.5" width="1.7" height="1.7" fill="#3a3a3a"></rect><rect x="0.5" y="20.5" width="1.7" height="1.7" fill="#3a3a3a"></rect><rect x="4.5" y="20.5" width="1.7" height="1.7" fill="#3a3a3a"></rect></svg>
<div class="a" style="left:20px;top:1021px;width:275px;height:21px;border:1px solid #8a8a8a;background:linear-gradient(#fdfdfd,#e8e8e8 60%,#dadada)"></div>
<svg class="a" style="left:28px;top:1025px" width="12" height="12" viewBox="0 0 12 12"><rect x="0.9" y="0.9" width="10.2" height="10.2" fill="#ddd" stroke="#555" stroke-width="1.8"></rect><rect x="0" y="0" width="12" height="3.3" fill="#555"></rect></svg>
<div class="a t" style="left: 48.65px; top: 1025.9px; font-size: 12px; font-weight: normal; font-family: &quot;Liberation Mono&quot;, monospace; color: rgb(17, 17, 17); transform-origin: 0px 0px; transform: scaleX(0.9062);">BlinkScreen</div>
<div class="a" style="left:277px;top:1023px;width:1px;height:17px;background:#a0a0a0"></div>
<svg class="a" style="left:281px;top:1029px" width="10" height="6" viewBox="0 0 10 6"><polygon points="0,0 10,0 5,5.5" fill="#111"></polygon></svg>
<div class="a" style="left:299px;top:1021px;width:20px;height:20px;border:1px solid #777;background:#fff"></div>
<svg class="a" style="left:303px;top:1025px" width="12" height="12" viewBox="0 0 12 12"><polygon points="0,3 3,0 3,11.5 0,11.5" fill="#555"></polygon><rect x="3.5" y="0.8" width="7.5" height="10" fill="#fff" stroke="#555" stroke-width="1.6"></rect></svg>
<div class="a" style="left:345px;top:1022px;width:19px;height:19px;background:#fbab5b;border:1px solid #888"></div>
<div class="a" style="left:359px;top:1022px;width:5px;height:4px;background:#008a00"></div>
<div class="a" style="left:359px;top:1036px;width:5px;height:5px;background:#008a00"></div>
<div class="a" style="left:368px;top:1022px;width:19px;height:19px;border:1px solid #888"></div>
<div class="a" style="left:391px;top:1022px;width:19px;height:19px;border:1px solid #888"></div>
<div class="a" style="left:414px;top:1022px;width:19px;height:19px;border:1px solid #888"></div>
<svg class="a" style="left:1035px;top:1023px" width="16" height="16" viewBox="0 0 16 16"><path d="M8 0 V16 M0 8 H16" stroke="#333" stroke-width="1.5"></path><rect x="4.5" y="4.5" width="7" height="7" fill="none" stroke="#333" stroke-width="1.2"></rect></svg>
<div class="a t" style="left: 1091px; top: 1026px; font-size: 12px; font-weight: normal; font-family: &quot;Liberation Mono&quot;, monospace; color: rgb(26, 26, 26); transform-origin: 0px 0px; transform: scaleX(0.9165);">w:4144 · h:2822 · n:1 · i16 · Gray · 22.305 MiB</div>
<div class="a" style="left:0;top:1048px;width:1920px;height:32px;background:#2b2b2b"></div>
<div class="a" style="left:0;top:1048px;width:27px;height:32px;background:#555"></div>
<svg class="a" style="left:2px;top:1054px" width="22" height="21" viewBox="0 0 22 21"><path d="M3 9 Q1 4 4 2 Q5 7 9 9 M2 12 Q6 9 10 12 M4 16 Q8 13 11 15 M11 5 Q13 1 16 3 L21 4 L15 5 Q12 7 13 11 Q15 17 9 19 L7 20" fill="none" stroke="#e4e4e4" stroke-width="1.5" stroke-linecap="round"></path></svg>
<svg class="a" style="left:30px;top:1055px" width="20" height="18" viewBox="0 0 20 18"><rect x="0" y="1" width="20" height="17" fill="#5294e2"></rect><rect x="0" y="0" width="20" height="1.5" fill="#1d3550"></rect><rect x="6" y="15.5" width="9" height="2.5" fill="#1d3550"></rect></svg>
<div class="a" style="left:54px;top:1048px;width:25px;height:32px;background:#650c0c"></div>
<div class="a t" style="left: 61.44px; top: 1054.95px; font-size: 16.5px; font-weight: bold; color: rgb(240, 240, 240); transform-origin: 0px 0px; transform: scaleX(1.0625);">1</div>
<div class="a t" style="left: 87.5px; top: 1054.95px; font-size: 16.5px; font-weight: normal; color: rgb(216, 216, 216); transform-origin: 0px 0px; transform: scaleX(1);">2</div>
<svg class="a" style="left:109px;top:1054px" width="21" height="21" viewBox="0 0 21 21"><rect x="2" y="0" width="16" height="3" fill="#5aa0e8"></rect><rect x="1" y="2.5" width="18" height="3" fill="#58c060"></rect><rect x="0.5" y="5" width="19" height="3" fill="#f0c040"></rect><rect x="0" y="7.5" width="20" height="13" rx="1.5" fill="#8a8a8a"></rect><rect x="7" y="12" width="6" height="1.8" fill="#eee"></rect></svg>
<svg class="a" style="left:140px;top:1055px" width="20" height="18" viewBox="0 0 20 18"><rect x="0" y="0" width="20" height="18" rx="2" fill="#4a4a4a"></rect><path d="M3 3.5 L7 6.5 L3 9.5" fill="none" stroke="#f0f0f0" stroke-width="1.6"></path><rect x="8" y="8.5" width="6" height="2" fill="#f0f0f0"></rect></svg>
<svg class="a" style="left:171px;top:1054px" width="20" height="21" viewBox="0 0 20 21"><rect x="0" y="0" width="20" height="21" rx="1" fill="#e6e6e6"></rect><rect x="0" y="17" width="20" height="4" fill="#b8b8b8"></rect><path d="M3 15 Q6 6 17 3 Q14 9 6 12 Z" fill="#4a86c8"></path></svg>
<svg class="a" style="left:205px;top:1053px" width="15" height="23" viewBox="0 0 15 23"><defs><linearGradient id="tcg" x1="0" y1="0" x2="0" y2="1"><stop offset="0" stop-color="#2020ff"></stop><stop offset="0.5" stop-color="#3a3aff"></stop><stop offset="1" stop-color="#e0e0ff"></stop></linearGradient></defs>
<polygon points="7.5,0.5 14.5,5.5 14.5,16 7.5,22.5 0.5,16 0.5,5.5" fill="url(#tcg)"></polygon><polygon points="7.5,10 14.5,5.5 14.5,16 7.5,22.5" fill="#7a7aff" opacity="0.45"></polygon></svg>
<div class="a t" style="left: 228px; top: 1054.95px; font-size: 16.5px; font-weight: normal; color: rgb(224, 224, 224); transform-origin: 0px 0px; transform: scaleX(1.0007);">PixInsight</div>
<svg class="a" style="left:405px;top:1055px" width="20" height="18" viewBox="0 0 20 18"><rect x="0" y="0" width="20" height="18" rx="2" fill="#4a4a4a"></rect><path d="M3 3.5 L7 6.5 L3 9.5" fill="none" stroke="#f0f0f0" stroke-width="1.6"></path><rect x="8" y="8.5" width="6" height="2" fill="#f0f0f0"></rect></svg>
<div class="a t" style="left: 429.74px; top: 1054.95px; font-size: 16.5px; font-weight: normal; color: rgb(216, 216, 216); transform-origin: 0px 0px; transform: scaleX(1.04);">joan@thinkpad: ~/...</div>
<svg class="a" style="left:605px;top:1055px" width="20" height="18" viewBox="0 0 20 18"><rect x="0" y="0" width="20" height="18" rx="2" fill="#4a4a4a"></rect><path d="M3 3.5 L7 6.5 L3 9.5" fill="none" stroke="#f0f0f0" stroke-width="1.6"></path><rect x="8" y="8.5" width="6" height="2" fill="#f0f0f0"></rect></svg>
<div class="a t" style="left: 629.74px; top: 1054.95px; font-size: 16.5px; font-weight: normal; color: rgb(216, 216, 216); transform-origin: 0px 0px; transform: scaleX(1.04);">joan@thinkpad: ~/...</div>
<svg class="a" style="left:806px;top:1054px" width="19" height="21" viewBox="0 0 19 21"><rect x="0" y="0" width="19" height="21" rx="1" fill="#e6e6e6"></rect><rect x="0" y="17" width="19" height="4" fill="#b8b8b8"></rect><path d="M3 15 Q6 6 16 3 Q13 9 6 12 Z" fill="#4a86c8"></path></svg>
<div class="a t" style="left: 829.5px; top: 1054.95px; font-size: 16.5px; font-weight: normal; color: rgb(216, 216, 216); transform-origin: 0px 0px; transform: scaleX(1.0153);">*Sense títol</div>
<div class="a t" style="left: 1607.68px; top: 1054.95px; font-size: 16.5px; font-weight: bold; color: rgb(168, 168, 168); transform-origin: 0px 0px; transform: scaleX(1.1237);">M N D</div>
<div class="a t" style="left: 1671.14px; top: 1054.95px; font-size: 16.5px; font-weight: normal; color: rgb(224, 224, 224); transform-origin: 0px 0px; transform: scaleX(0.8569);">ES</div>
<svg class="a" style="left:1703px;top:1056px" width="17" height="16" viewBox="0 0 17 16"><polygon points="8,0 13,4 8,8" fill="#777"></polygon><rect x="2" y="3" width="7" height="2.2" fill="#777"></rect><polygon points="6,6 1,10 6,14" fill="#777"></polygon><rect x="5" y="9" width="7" height="2.2" fill="#777"></rect><path d="M12 11 L16 15 M16 11 L12 15" stroke="#f0f0f0" stroke-width="1.5"></path></svg>
<svg class="a" style="left:1731px;top:1056px" width="15" height="16" viewBox="0 0 15 16"><path d="M7.5 1 Q12.5 1 12.5 7 V11 L14.5 13 H0.5 L2.5 11 V7 Q2.5 1 7.5 1 Z" fill="#f0f0f0"></path><rect x="5.5" y="13.5" width="4" height="2" rx="1" fill="#f0f0f0"></rect></svg>
<svg class="a" style="left:1756px;top:1053px" width="22" height="23" viewBox="0 0 22 23"><defs><linearGradient id="tcg2" x1="0" y1="0" x2="0" y2="1"><stop offset="0" stop-color="#2020ff"></stop><stop offset="0.5" stop-color="#3a3aff"></stop><stop offset="1" stop-color="#e0e0ff"></stop></linearGradient></defs>
<polygon points="9,0.5 16.5,5.5 16.5,16 9,22 1.5,16 1.5,5.5" fill="url(#tcg2)"></polygon><circle cx="16.5" cy="17" r="4.8" fill="#30a060"></circle><path d="M16.5 14 V20 M13.5 17 H19.5" stroke="#fff" stroke-width="1.6"></path></svg>
<svg class="a" style="left:1786px;top:1054px" width="16" height="21" viewBox="0 0 16 21"><rect x="0" y="0" width="16" height="21" fill="#8a8a8a"></rect><polygon points="8,5 13,10 3,10" fill="#d8d8d8"></polygon><rect x="3" y="11.5" width="10" height="2" fill="#d8d8d8"></rect></svg>
<svg class="a" style="left:1813px;top:1056px" width="18" height="16" viewBox="0 0 18 16"><polygon points="0,5 4,5 9,0.5 9,15.5 4,11 0,11" fill="#f0f0f0"></polygon><path d="M11.5 4.5 Q14 8 11.5 11.5 M13.5 2 Q17.5 8 13.5 14" fill="none" stroke="#888" stroke-width="1.5"></path></svg>
<div class="a t" style="left: 1840.95px; top: 1054.95px; font-size: 16.5px; font-weight: normal; color: rgb(224, 224, 224); transform-origin: 0px 0px; transform: scaleX(1.047);">18:44</div>
<svg class="a" style="left:1893px;top:1054px" width="20" height="20" viewBox="0 0 20 20"><circle cx="10" cy="10" r="9.5" fill="#e83a30"></circle><path d="M6.3 6 A5.5 5.5 0 1 0 13.7 6" fill="none" stroke="#fff" stroke-width="2"></path><rect x="9" y="3" width="2" height="7" fill="#fff"></rect></svg>
</body></html>
